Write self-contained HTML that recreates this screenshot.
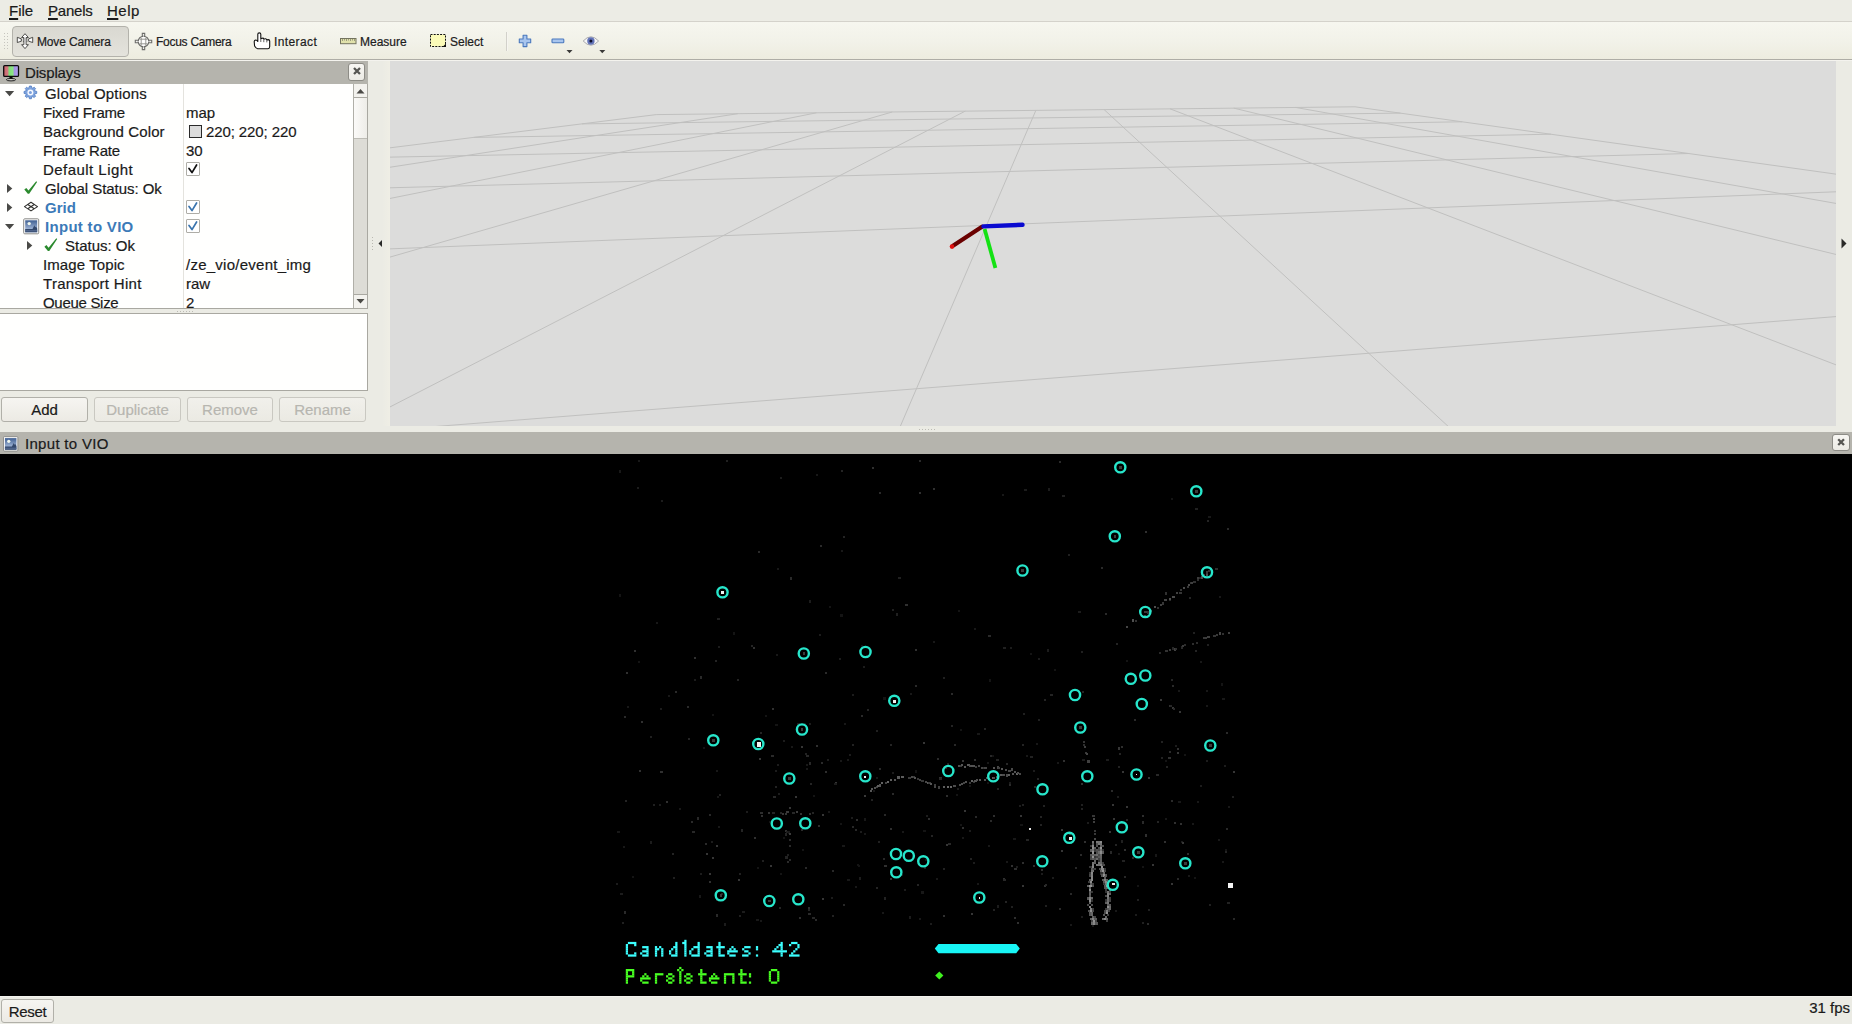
<!DOCTYPE html>
<html>
<head>
<meta charset="utf-8">
<title>RViz</title>
<style>
*{box-sizing:border-box;margin:0;padding:0}
html,body{width:1852px;height:1024px;overflow:hidden}
body{background:#ebebe4;font-family:"Liberation Sans",sans-serif;font-size:15px;color:#1a1a1a;position:relative;-webkit-text-stroke:0.2px #1a1a1a}
.abs{position:absolute}
.t{position:absolute;white-space:nowrap;line-height:19px;height:19px}
u{text-decoration:underline;text-underline-offset:2px;text-decoration-thickness:1.6px}
/* menu */
#menubar{left:0;top:0;width:1852px;height:22px;background:#ecece5;border-bottom:1px solid #d4d2cb}
#menubar .t{top:1px;font-size:15px}
/* toolbar */
#toolbar{left:0;top:22px;width:1852px;height:39px;background:linear-gradient(#f6f6ef,#f2f2e9 50%,#edecdf);border-bottom:1px solid #f4f3ee}
#toolbar:after{content:"";position:absolute;left:0;right:0;bottom:0;height:1px;background:#aeada6}
#toolbar .t{font-size:12px;top:11px;line-height:18px;height:18px;color:#222}
#mvbtn{left:12px;top:4px;width:117px;height:31px;border:1px solid #b3b2ab;border-radius:4px;background:linear-gradient(#d9d8d1,#e4e3dc)}
.tsep{left:506px;top:10px;width:1px;height:19px;background:#d2d1ca;border-right:1px solid #f6f5f0;width:2px}
/* dock title */
.dtitle{background:#b5b4ad;height:23px}
.dtitle .t{top:2px;color:#1a1a1a}
.closeb{position:absolute;width:17px;height:17px;border:1px solid #8d8c86;border-radius:3px;background:linear-gradient(#f7f6f2,#ecebe5)}
/* tree */
#tree{left:0;top:84px;width:368px;height:225px;background:#fffffe;border-right:1px solid #a9a8a1;border-bottom:1px solid #a9a8a1;overflow:hidden}
#tree .t{font-size:15px}
#tree .b{font-weight:bold;color:#3c7ab8;-webkit-text-stroke:0}
#coldiv{left:183px;top:0;width:1px;height:224px;background:#e4e3de}
.cb{position:absolute;width:14px;height:14px;border:1px solid #aeada7;background:#fff;border-radius:1px}
#sbar{left:353px;top:0;width:14px;height:224px;background:#dddcd6;border-left:1px solid #b0afa8}
#propbox{left:0;top:313px;width:368px;height:78px;background:#fffffe;border:1px solid #a9a8a1;border-left:none}
.btn{position:absolute;height:25px;border:1px solid #b1b0a9;border-radius:3px;background:linear-gradient(#f6f5f1,#eceae4);font-size:15px;text-align:center;line-height:24px;color:#1a1a1a}
.btn.dis{color:#b7b6b0;-webkit-text-stroke:0.2px #b7b6b0;border-color:#c9c8c1;background:linear-gradient(#f1f0eb,#ebeae3)}
#view3d{left:390px;top:61px;width:1446px;height:365px;background:#dcdcdb;overflow:hidden}
#imgarea{left:0;top:454px;width:1852px;height:542px;background:#000;overflow:hidden}
#status{left:0;top:996px;width:1852px;height:28px;background:#ebebe4;border-top:1px solid #f3f3ee}
</style>
</head>
<body>
<!-- MENU BAR -->
<div id="menubar" class="abs">
  <div class="t" style="left:9px"><u>F</u>ile</div>
  <div class="t" style="letter-spacing:-0.2px;left:48px"><u>P</u>anels</div>
  <div class="t" style="letter-spacing:0.5px;left:107px"><u>H</u>elp</div>
</div>

<!-- TOOLBAR -->
<div id="toolbar" class="abs">
  <div id="mvbtn" class="abs"></div>
  <div class="t" id="tb1" style="letter-spacing:-0.15px;left:37px">Move Camera</div>
  <div class="t" id="tb2" style="letter-spacing:-0.27px;left:156px">Focus Camera</div>
  <div class="t" id="tb3" style="letter-spacing:0.4px;left:274px">Interact</div>
  <div class="t" id="tb4" style="left:360px">Measure</div>
  <div class="t" id="tb5" style="left:450px">Select</div>
  <div class="abs tsep"></div>
  <svg class="abs" style="left:0;top:0" width="620" height="39" viewBox="0 22 620 39">
<g fill="#c6c5be"><rect x="4" y="33" width="1" height="1"/><rect x="7" y="33" width="1" height="1"/><rect x="4" y="36" width="1" height="1"/><rect x="7" y="36" width="1" height="1"/><rect x="4" y="39" width="1" height="1"/><rect x="7" y="39" width="1" height="1"/><rect x="4" y="42" width="1" height="1"/><rect x="7" y="42" width="1" height="1"/><rect x="4" y="45" width="1" height="1"/><rect x="7" y="45" width="1" height="1"/><rect x="4" y="48" width="1" height="1"/><rect x="7" y="48" width="1" height="1"/></g>
<!-- move camera -->
<g stroke="#343432" stroke-width="0.85" fill="#fdfdfd" stroke-linejoin="round">
<path d="M17.3 37.3 L21.4 38.9 L21.4 41.2 L17.3 42.5 Z"/>
<path d="M32.7 37.3 L28.6 38.9 L28.6 41.2 L32.7 42.5 Z"/>
<path d="M20.8 40 Q25 37 29.2 40 Q25 43.2 20.8 40Z" fill="#dcdcd8" stroke="#4a4a48" stroke-dasharray="1.3 1.1" stroke-width="0.8"/>
<path d="M25 33.7 L28.4 37.5 L26.1 37.5 L26.1 44.7 L28.4 44.7 L25 48.6 L21.6 44.7 L23.9 44.7 L23.9 37.5 L21.6 37.5 Z"/>
</g>
<!-- focus camera -->
<g stroke="#6e6e6b" stroke-width="1.1" fill="none">
<circle cx="143.5" cy="41.5" r="5.3" fill="#fafaf8"/>
<path d="M142.3 33.4h2.4v3h-2.4zM142.3 46.6h2.4v3h-2.4zM135.3 40.3h3v2.4h-3zM148.7 40.3h3v2.4h-3z" fill="#f4f4f0"/>
<path d="M143.5 36.5v10M138.5 41.5h10" stroke="#fff" stroke-width="1"/>
<path d="M141.2 37.5v8M145.8 37.5v8M139.5 39.2h8M139.5 43.8h8" stroke="#8e8e8b" stroke-width="0.9"/>
</g>
<!-- interact hand -->
<path d="M257.8 41.5 L257.8 34.2 Q257.8 32.9 259.3 32.9 Q260.8 32.9 260.8 34.2 L260.8 38.6 L262.3 38.2 Q263.6 38 263.8 39.2 L265.3 38.8 Q266.6 38.7 266.8 39.9 L268.3 39.6 Q269.7 39.6 269.7 41 L269.7 46.5 Q269.7 48.6 268 48.7 L257.6 48.7 Q256 48.4 254.6 46 L254.2 41.6 Q254.3 40 255.8 40 Q257 40.1 257.8 41.5 Z" fill="#fff" stroke="#111" stroke-width="1.1" stroke-linejoin="round"/>
<path d="M260.8 38.8v3.2M263.8 39.6v2.6M266.8 40.2v2.2" stroke="#555" stroke-width="0.9" fill="none"/>
<!-- measure ruler -->
<rect x="340.5" y="38.5" width="15.5" height="5.2" fill="#e1e2ac" stroke="#74745f" stroke-width="1"/>
<path d="M342.5 39v2M344.5 39v1.5M346.5 39v2M348.5 39v1.5M350.5 39v2M352.5 39v1.5M354.5 39v2" stroke="#8a8a70" stroke-width="0.8"/>
<!-- select -->
<rect x="430.5" y="34.5" width="15" height="12" fill="#fbfbb8" stroke="#111" stroke-width="1" stroke-dasharray="2 1.2"/>
<path d="M446 43.5 L446 47 L442.5 47 Z" fill="#111"/>
<!-- plus -->
<path d="M523.1 35.2h3.8v3.8h3.8v3.8h-3.8v3.8h-3.8v-3.8h-3.8v-3.8h3.8z" fill="#a8c5ee" stroke="#4a78bd" stroke-width="1.1" stroke-linejoin="round"/>
<!-- minus -->
<rect x="552" y="39" width="11.8" height="3.8" rx="0.8" fill="#a8c5ee" stroke="#4a78bd" stroke-width="1.1"/>
<path d="M566.5 50 L572.5 50 L569.5 53.2Z" fill="#3a3a38"/>
<!-- eye -->
<path d="M583.2 41 Q590.9 32.5 598.6 41 Q590.9 49.5 583.2 41Z" fill="#f6f6f6" stroke="#a9a9ad" stroke-width="1"/>
<circle cx="590.9" cy="41" r="3.7" fill="#6273b8"/>
<circle cx="590.9" cy="41" r="1.5" fill="#10102a"/>
<path d="M599.3 50 L605.3 50 L602.3 53.2Z" fill="#3a3a38"/>
</svg>
</div>

<!-- DISPLAYS DOCK -->
<div class="abs dtitle" style="left:0;top:61px;width:368px">
  <div class="t" style="letter-spacing:-0.15px;left:25px">Displays</div>
  <div class="closeb" style="left:348px;top:2px;height:18px"></div>
  <svg class="abs" style="left:0;top:0" width="368" height="23" viewBox="0 61 368 23">
<defs><linearGradient id="mon" x1="0" x2="1" y1="0" y2="0"><stop offset="0" stop-color="#c8626a"/><stop offset="0.27" stop-color="#d27a80"/><stop offset="0.36" stop-color="#7fdc7a"/><stop offset="0.62" stop-color="#8ce688"/><stop offset="0.72" stop-color="#a392e2"/><stop offset="1" stop-color="#b3a4ee"/></linearGradient></defs>
<rect x="3.7" y="65.6" width="14.8" height="10.8" rx="1" fill="url(#mon)" stroke="#0a0a0a" stroke-width="1.3"/>
<path d="M9.6 77 L12.4 77 L13 78.8 L9 78.8Z" fill="#0a0a0a"/>
<ellipse cx="11" cy="79.7" rx="4.6" ry="1.2" fill="#d8d8d4" stroke="#0a0a0a" stroke-width="0.9"/>
<path d="M354 68 L360 74 M360 68 L354 74" stroke="#565652" stroke-width="2.3" fill="none"/>
</svg>
</div>
<div id="tree" class="abs">
  <div id="coldiv" class="abs"></div>
  <div class="t" style="letter-spacing:0.2px;left:45px;top:0px">Global Options</div>
  <div class="t" style="letter-spacing:-0.2px;left:43px;top:19px">Fixed Frame</div>
  <div class="t" style="left:186px;top:19px">map</div>
  <div class="t" style="letter-spacing:0.1px;left:43px;top:38px">Background Color</div>
  <div class="abs" style="left:189px;top:41px;width:13px;height:13px;border:1px solid #2a2a2a;background:#dcdcdc"></div>
  <div class="t" style="letter-spacing:-0.1px;left:206px;top:38px">220; 220; 220</div>
  <div class="t" style="letter-spacing:-0.23px;left:43px;top:57px">Frame Rate</div>
  <div class="t" style="left:186px;top:57px">30</div>
  <div class="t" style="letter-spacing:0.46px;left:43px;top:76px">Default Light</div>
  <div class="cb" style="left:186px;top:78px"></div>
  <div class="t" style="letter-spacing:-0.05px;left:45px;top:95px">Global Status: Ok</div>
  <div class="t b" style="left:45px;top:114px">Grid</div>
  <div class="cb" style="left:186px;top:116px"></div>
  <div class="t b" style="letter-spacing:0.3px;left:45px;top:133px">Input to VIO</div>
  <div class="cb" style="left:186px;top:135px"></div>
  <div class="t" style="left:65px;top:152px">Status: Ok</div>
  <div class="t" style="letter-spacing:0.1px;left:43px;top:171px">Image Topic</div>
  <div class="t" style="letter-spacing:0.25px;left:186px;top:171px">/ze_vio/event_img</div>
  <div class="t" style="letter-spacing:0.3px;left:43px;top:190px">Transport Hint</div>
  <div class="t" style="left:186px;top:190px">raw</div>
  <div class="t" style="letter-spacing:-0.3px;left:43px;top:209px">Queue Size</div>
  <div class="t" style="left:186px;top:209px">2</div>
  <div id="sbar" class="abs">
    <div class="abs" style="left:0;top:0;width:13px;height:14px;background:#f3f2ee;border-bottom:1px solid #a9a8a1"></div>
    <div class="abs" style="left:0;top:14px;width:13px;height:41px;background:linear-gradient(90deg,#fbfaf8,#eeede8);border-bottom:1px solid #bdbcb5"></div>
    <div class="abs" style="left:0;top:210px;width:13px;height:14px;background:#f3f2ee;border-top:1px solid #a9a8a1"></div>
    <svg class="abs" style="left:0;top:0" width="13" height="224"><path d="M2.5 9.5 L6.5 5 L10.5 9.5Z" fill="#4a4945"/><path d="M2.5 215 L10.5 215 L6.5 219.5Z" fill="#4a4945"/></svg>
  </div>
  <svg class="abs" style="left:0;top:0" width="353" height="224" viewBox="0 84 353 224">
<defs><linearGradient id="sky2" x1="0" x2="0" y1="0" y2="1"><stop offset="0" stop-color="#3f5f92"/><stop offset="0.7" stop-color="#9ab0d2"/><stop offset="1" stop-color="#8aa0c4"/></linearGradient></defs>
<g fill="#4a4a47">
<path d="M5 91 L14.2 91 L9.6 96.2Z"/>
<path d="M7 184 L12.3 188.5 L7 193Z"/>
<path d="M7 203 L12.3 207.5 L7 212Z"/>
<path d="M5 224 L14.2 224 L9.6 229.2Z"/>
<path d="M27 241 L32.3 245.5 L27 250Z"/>
</g>
<path d="M36.72 91.38 L36.72 93.42 L35.16 93.56 L34.59 94.94 L35.59 96.15 L34.15 97.59 L32.94 96.59 L31.56 97.16 L31.42 98.72 L29.38 98.72 L29.24 97.16 L27.86 96.59 L26.65 97.59 L25.21 96.15 L26.21 94.94 L25.64 93.56 L24.08 93.42 L24.08 91.38 L25.64 91.24 L26.21 89.86 L25.21 88.65 L26.65 87.21 L27.86 88.21 L29.24 87.64 L29.38 86.08 L31.42 86.08 L31.56 87.64 L32.94 88.21 L34.15 87.21 L35.59 88.65 L34.59 89.86 L35.16 91.24Z" fill="#7fa4de" stroke="#5580c4" stroke-width="0.9" stroke-linejoin="round"/><circle cx="30.4" cy="92.4" r="3" fill="#f6f9ff"/><circle cx="30.4" cy="92.4" r="1.5" fill="#7a9fdb"/><path d="M24.3 189.6 L26.3 187.9 L28.5 190.6 L36.2 181.2 L37.1 181.9 L29.2 193.8 L27.8 193.8Z" fill="#2b8a2e"/><path d="M44.4 246.7 L46.4 245.0 L48.6 247.7 L56.3 238.3 L57.2 239.0 L49.3 250.9 L47.9 250.9Z" fill="#2b8a2e"/>
<g stroke="#2f2f2d" stroke-width="1.1" fill="none" stroke-linejoin="round"><path d="M24.5 206.6 L31 202.3 L37.5 206.6 L31 210.9Z"/><path d="M27.75 204.45 L34.25 208.75 M34.25 204.45 L27.75 208.75"/></g>
<g transform="translate(23.2,218.3)"><rect x="0.5" y="0.5" width="15" height="15" rx="1" fill="#fdfdfd" stroke="#8b8b88" stroke-width="1"/>
<rect x="2" y="2" width="12" height="12" fill="url(#sky2)"/>
<circle cx="6" cy="5.3" r="1.7" fill="#eef6ee"/>
<path d="M2 10.6 L9.3 10.6 L11.2 7 L12 9 L12.8 8.2 L14 10.2 L14 14 L2 14Z" fill="#33486c"/>
<rect x="2" y="12" width="12" height="1" fill="#5a7098"/></g>
<path d="M189.0 168.4 L192.0 172.6 L196.6 165.0" stroke="#111" stroke-width="1.7" fill="none" stroke-linecap="round" stroke-linejoin="round"/><path d="M189.0 206.4 L192.0 210.6 L196.6 203.0" stroke="#3a74ae" stroke-width="1.7" fill="none" stroke-linecap="round" stroke-linejoin="round"/><path d="M189.0 225.4 L192.0 229.6 L196.6 222.0" stroke="#3a74ae" stroke-width="1.7" fill="none" stroke-linecap="round" stroke-linejoin="round"/>
</svg>
</div>
<div id="propbox" class="abs"></div>
<div class="btn" style="left:1px;top:397px;width:87px">Add</div>
<div class="btn dis" style="left:94px;top:397px;width:87px">Duplicate</div>
<div class="btn dis" style="left:187px;top:397px;width:86px">Remove</div>
<div class="btn dis" style="left:279px;top:397px;width:87px">Rename</div>

<!-- splitter dots -->
<svg class="abs" style="left:176px;top:310px" width="20" height="3"><g fill="#bcbbb4"><rect x="1" y="1" width="1" height="1"/><rect x="4" y="1" width="1" height="1"/><rect x="7" y="1" width="1" height="1"/><rect x="10" y="1" width="1" height="1"/><rect x="13" y="1" width="1" height="1"/><rect x="16" y="1" width="1" height="1"/></g></svg>
<svg class="abs" style="left:918px;top:428px" width="20" height="3"><g fill="#bcbbb4"><rect x="1" y="1" width="1" height="1"/><rect x="4" y="1" width="1" height="1"/><rect x="7" y="1" width="1" height="1"/><rect x="10" y="1" width="1" height="1"/><rect x="13" y="1" width="1" height="1"/><rect x="16" y="1" width="1" height="1"/></g></svg>
<!-- splitter arrows -->
<svg class="abs" style="left:368px;top:61px" width="22" height="365"><path d="M10.5 182.5 L15.5 177.5 L15.5 187.5Z" fill="#2a2a28"/><g fill="#b9b8b1"><rect x="4" y="176" width="1" height="1"/><rect x="4" y="179" width="1" height="1"/><rect x="4" y="182" width="1" height="1"/><rect x="4" y="185" width="1" height="1"/><rect x="4" y="188" width="1" height="1"/></g></svg>
<svg class="abs" style="left:1836px;top:61px" width="16" height="365"><path d="M10.5 182.5 L5.5 177.5 L5.5 187.5Z" fill="#2a2a28"/></svg>

<div class="abs" style="left:382px;top:61px;width:8px;height:365px;background:linear-gradient(90deg,#ebebe4,#efeee5)"></div>
<!-- 3D VIEW -->
<div id="view3d" class="abs">
<svg width="1446" height="365" viewBox="0 0 1446 365" style="position:absolute;left:0;top:0">
<g stroke="#c0c0bf" stroke-width="1" fill="none">
<line x1="266.2" y1="53.6" x2="-19295.4" y2="2494.9"/>
<line x1="266.2" y1="53.6" x2="965.0" y2="45.8"/>
<line x1="347.8" y1="52.7" x2="-15517.2" y2="2495.3"/>
<line x1="192.0" y1="62.9" x2="1010.5" y2="52.1"/>
<line x1="426.4" y1="51.8" x2="-11738.9" y2="2495.7"/>
<line x1="83.8" y1="76.4" x2="1072.3" y2="60.8"/>
<line x1="502.2" y1="51.0" x2="-7960.7" y2="2496.1"/>
<line x1="-88.5" y1="97.9" x2="1161.0" y2="73.2"/>
<line x1="575.3" y1="50.1" x2="-4182.4" y2="2496.6"/>
<line x1="-405.7" y1="137.5" x2="1299.2" y2="92.5"/>
<line x1="645.9" y1="49.3" x2="-404.2" y2="2497.0"/>
<line x1="-1183.7" y1="234.6" x2="1544.3" y2="126.9"/>
<line x1="714.1" y1="48.6" x2="3374.1" y2="2497.4"/>
<line x1="-6092.1" y1="847.1" x2="2098.4" y2="204.4"/>
<line x1="780.0" y1="47.8" x2="7152.3" y2="2497.8"/>
<line x1="4159.3" y1="2497.5" x2="4542.8" y2="546.7"/>
<line x1="843.7" y1="47.1" x2="10930.5" y2="2498.2"/>
<line x1="905.4" y1="46.4" x2="14708.8" y2="2498.7"/>
<line x1="965.0" y1="45.8" x2="18487.0" y2="2499.1"/>
</g>
<g stroke-linecap="round" fill="none" transform="translate(-390,-61)">
<path d="M982 226.8 L953 245.8" stroke="#6a0000" stroke-width="4.2"/>
<circle cx="952" cy="246.6" r="2.3" fill="#e01010" stroke="none"/>
<path d="M984.6 229 L995.4 268" stroke="#14e214" stroke-width="3.8" stroke-linecap="butt"/>
<path d="M983.5 226.4 L1022.5 224.8" stroke="#0a0ad0" stroke-width="4.4"/>
</g>
</svg>
</div>

<!-- IMAGE DOCK -->
<div class="abs dtitle" style="left:0;top:432px;width:1852px;height:22px">
  <div class="t" style="letter-spacing:0.3px;left:25px;top:2px">Input to VIO</div>
  <div class="closeb" style="left:1832px;top:2px;width:18px;height:17px"></div>
  <svg class="abs" style="left:0;top:0" width="1852" height="22" viewBox="0 432 1852 22">
<defs><linearGradient id="sky" x1="0" x2="0" y1="0" y2="1"><stop offset="0" stop-color="#3f5f92"/><stop offset="0.7" stop-color="#9ab0d2"/><stop offset="1" stop-color="#8aa0c4"/></linearGradient></defs>
<g transform="translate(3,436.2) scale(0.96)"><rect x="0.5" y="0.5" width="15" height="15" rx="1" fill="#fdfdfd" stroke="#8b8b88" stroke-width="1"/>
<rect x="2" y="2" width="12" height="12" fill="url(#sky)"/>
<circle cx="6" cy="5.3" r="1.7" fill="#eef6ee"/>
<path d="M2 10.6 L9.3 10.6 L11.2 7 L12 9 L12.8 8.2 L14 10.2 L14 14 L2 14Z" fill="#33486c"/>
<rect x="2" y="12" width="12" height="1" fill="#5a7098"/></g>
<path d="M1838.2 439.2 L1844 445 M1844 439.2 L1838.2 445" stroke="#565652" stroke-width="2.3" fill="none"/>
</svg>
</div>
<div id="imgarea" class="abs">
<svg width="1852" height="542" viewBox="0 0 1852 542" style="position:absolute;left:0;top:0">
<g shape-rendering="crispEdges"><rect x="660.0" y="254.3" width="2.1" height="2.1" fill="rgb(28,28,28)"/><rect x="976.9" y="428.8" width="2.1" height="2.1" fill="rgb(24,24,24)"/><rect x="638.3" y="206.5" width="2.1" height="2.1" fill="rgb(20,20,20)"/><rect x="764.5" y="261.3" width="2.1" height="2.1" fill="rgb(20,20,20)"/><rect x="1004.6" y="446.6" width="2.1" height="2.1" fill="rgb(36,36,36)"/><rect x="950.8" y="270.6" width="2.1" height="2.1" fill="rgb(36,36,36)"/><rect x="1037.5" y="203.7" width="2.1" height="2.1" fill="rgb(28,28,28)"/><rect x="904.1" y="435.2" width="2.1" height="2.1" fill="rgb(28,28,28)"/><rect x="801.2" y="375.0" width="2.1" height="2.1" fill="rgb(42,42,42)"/><rect x="717.4" y="163.7" width="2.1" height="2.1" fill="rgb(32,32,32)"/><rect x="639.3" y="316.1" width="2.1" height="2.1" fill="rgb(48,48,48)"/><rect x="961.6" y="372.5" width="2.1" height="2.1" fill="rgb(48,48,48)"/><rect x="809.8" y="328.7" width="2.1" height="2.1" fill="rgb(36,36,36)"/><rect x="923.4" y="376.1" width="2.1" height="2.1" fill="rgb(20,20,20)"/><rect x="1136.6" y="445.2" width="2.1" height="2.1" fill="rgb(32,32,32)"/><rect x="1047.9" y="34.4" width="2.1" height="2.1" fill="rgb(28,28,28)"/><rect x="1016.9" y="467.8" width="2.1" height="2.1" fill="rgb(48,48,48)"/><rect x="891.7" y="338.7" width="2.1" height="2.1" fill="rgb(42,42,42)"/><rect x="830.5" y="443.3" width="2.1" height="2.1" fill="rgb(28,28,28)"/><rect x="857.8" y="411.0" width="2.1" height="2.1" fill="rgb(20,20,20)"/><rect x="718.3" y="191.6" width="2.1" height="2.1" fill="rgb(28,28,28)"/><rect x="1163.6" y="386.6" width="2.1" height="2.1" fill="rgb(48,48,48)"/><rect x="956.7" y="333.9" width="2.1" height="2.1" fill="rgb(28,28,28)"/><rect x="622.5" y="392.1" width="2.1" height="2.1" fill="rgb(24,24,24)"/><rect x="844.3" y="268.5" width="2.1" height="2.1" fill="rgb(24,24,24)"/><rect x="1043.8" y="244.7" width="2.1" height="2.1" fill="rgb(36,36,36)"/><rect x="1021.7" y="349.5" width="2.1" height="2.1" fill="rgb(32,32,32)"/><rect x="1173.6" y="368.2" width="2.1" height="2.1" fill="rgb(48,48,48)"/><rect x="1037.6" y="265.2" width="2.1" height="2.1" fill="rgb(32,32,32)"/><rect x="840.8" y="15.9" width="2.1" height="2.1" fill="rgb(36,36,36)"/><rect x="848.6" y="300.3" width="2.1" height="2.1" fill="rgb(28,28,28)"/><rect x="989.0" y="225.4" width="2.1" height="2.1" fill="rgb(20,20,20)"/><rect x="1142.2" y="467.8" width="2.1" height="2.1" fill="rgb(32,32,32)"/><rect x="1080.5" y="349.7" width="2.1" height="2.1" fill="rgb(32,32,32)"/><rect x="1205.6" y="250.7" width="2.1" height="2.1" fill="rgb(24,24,24)"/><rect x="1043.5" y="430.9" width="2.1" height="2.1" fill="rgb(48,48,48)"/><rect x="943.0" y="461.0" width="2.1" height="2.1" fill="rgb(48,48,48)"/><rect x="671.5" y="398.8" width="2.1" height="2.1" fill="rgb(36,36,36)"/><rect x="842.7" y="82.0" width="2.1" height="2.1" fill="rgb(36,36,36)"/><rect x="951.3" y="238.8" width="2.1" height="2.1" fill="rgb(42,42,42)"/><rect x="753.5" y="383.0" width="2.1" height="2.1" fill="rgb(48,48,48)"/><rect x="1144.5" y="380.4" width="2.1" height="2.1" fill="rgb(48,48,48)"/><rect x="863.8" y="379.2" width="2.1" height="2.1" fill="rgb(24,24,24)"/><rect x="1045.1" y="450.7" width="2.1" height="2.1" fill="rgb(32,32,32)"/><rect x="1117.1" y="341.7" width="2.1" height="2.1" fill="rgb(28,28,28)"/><rect x="1002.5" y="424.4" width="2.1" height="2.1" fill="rgb(48,48,48)"/><rect x="616.2" y="428.6" width="2.1" height="2.1" fill="rgb(28,28,28)"/><rect x="1180.0" y="369.3" width="2.1" height="2.1" fill="rgb(48,48,48)"/><rect x="738.8" y="419.2" width="2.1" height="2.1" fill="rgb(32,32,32)"/><rect x="1105.1" y="159.3" width="2.1" height="2.1" fill="rgb(42,42,42)"/><rect x="860.8" y="191.4" width="2.1" height="2.1" fill="rgb(20,20,20)"/><rect x="708.9" y="426.6" width="2.1" height="2.1" fill="rgb(48,48,48)"/><rect x="1022.3" y="289.6" width="2.1" height="2.1" fill="rgb(36,36,36)"/><rect x="1223.8" y="310.9" width="2.1" height="2.1" fill="rgb(28,28,28)"/><rect x="711.8" y="260.0" width="2.1" height="2.1" fill="rgb(20,20,20)"/><rect x="623.8" y="457.4" width="2.1" height="2.1" fill="rgb(42,42,42)"/><rect x="678.8" y="354.0" width="2.1" height="2.1" fill="rgb(24,24,24)"/><rect x="884.4" y="411.1" width="2.1" height="2.1" fill="rgb(48,48,48)"/><rect x="926.2" y="360.6" width="2.1" height="2.1" fill="rgb(28,28,28)"/><rect x="776.1" y="199.7" width="2.1" height="2.1" fill="rgb(24,24,24)"/><rect x="652.8" y="349.5" width="2.1" height="2.1" fill="rgb(32,32,32)"/><rect x="1026.4" y="384.6" width="2.1" height="2.1" fill="rgb(36,36,36)"/><rect x="876.2" y="432.6" width="2.1" height="2.1" fill="rgb(36,36,36)"/><rect x="1157.0" y="366.6" width="2.1" height="2.1" fill="rgb(36,36,36)"/><rect x="617.4" y="377.2" width="2.1" height="2.1" fill="rgb(24,24,24)"/><rect x="702.9" y="293.1" width="2.1" height="2.1" fill="rgb(20,20,20)"/><rect x="959.9" y="370.3" width="2.1" height="2.1" fill="rgb(20,20,20)"/><rect x="632.3" y="421.5" width="2.1" height="2.1" fill="rgb(20,20,20)"/><rect x="890.3" y="290.1" width="2.1" height="2.1" fill="rgb(36,36,36)"/><rect x="930.6" y="381.0" width="2.1" height="2.1" fill="rgb(36,36,36)"/><rect x="1199.7" y="330.5" width="2.1" height="2.1" fill="rgb(28,28,28)"/><rect x="1188.0" y="420.9" width="2.1" height="2.1" fill="rgb(24,24,24)"/><rect x="660.4" y="316.6" width="2.1" height="2.1" fill="rgb(48,48,48)"/><rect x="691.0" y="366.8" width="2.1" height="2.1" fill="rgb(42,42,42)"/><rect x="700.2" y="222.4" width="2.1" height="2.1" fill="rgb(42,42,42)"/><rect x="1206.5" y="190.0" width="2.1" height="2.1" fill="rgb(32,32,32)"/><rect x="716.1" y="315.9" width="2.1" height="2.1" fill="rgb(24,24,24)"/><rect x="715.3" y="205.5" width="2.1" height="2.1" fill="rgb(36,36,36)"/><rect x="865.8" y="200.7" width="2.1" height="2.1" fill="rgb(28,28,28)"/><rect x="812.8" y="341.2" width="2.1" height="2.1" fill="rgb(20,20,20)"/><rect x="824.9" y="218.2" width="2.1" height="2.1" fill="rgb(42,42,42)"/><rect x="933.1" y="34.0" width="2.1" height="2.1" fill="rgb(48,48,48)"/><rect x="756.9" y="413.3" width="2.1" height="2.1" fill="rgb(20,20,20)"/><rect x="779.9" y="22.5" width="2.1" height="2.1" fill="rgb(28,28,28)"/><rect x="1084.3" y="386.8" width="2.1" height="2.1" fill="rgb(48,48,48)"/><rect x="1181.0" y="386.5" width="2.1" height="2.1" fill="rgb(28,28,28)"/><rect x="867.1" y="254.6" width="2.1" height="2.1" fill="rgb(36,36,36)"/><rect x="969.3" y="331.1" width="2.1" height="2.1" fill="rgb(20,20,20)"/><rect x="788.3" y="377.4" width="2.1" height="2.1" fill="rgb(24,24,24)"/><rect x="879.1" y="37.8" width="2.1" height="2.1" fill="rgb(42,42,42)"/><rect x="622.2" y="468.3" width="2.1" height="2.1" fill="rgb(32,32,32)"/><rect x="808.7" y="146.4" width="2.1" height="2.1" fill="rgb(28,28,28)"/><rect x="891.8" y="317.9" width="2.1" height="2.1" fill="rgb(28,28,28)"/><rect x="624.5" y="346.3" width="2.1" height="2.1" fill="rgb(36,36,36)"/><rect x="1222.4" y="244.1" width="2.1" height="2.1" fill="rgb(24,24,24)"/><rect x="1195.4" y="53.6" width="2.1" height="2.1" fill="rgb(32,32,32)"/><rect x="1022.7" y="258.9" width="2.1" height="2.1" fill="rgb(32,32,32)"/><rect x="757.6" y="96.8" width="2.1" height="2.1" fill="rgb(42,42,42)"/><rect x="1009.9" y="193.0" width="2.1" height="2.1" fill="rgb(28,28,28)"/><rect x="1224.7" y="394.9" width="2.1" height="2.1" fill="rgb(20,20,20)"/><rect x="658.9" y="350.0" width="2.1" height="2.1" fill="rgb(28,28,28)"/><rect x="851.5" y="240.3" width="2.1" height="2.1" fill="rgb(28,28,28)"/><rect x="986.8" y="327.5" width="2.1" height="2.1" fill="rgb(20,20,20)"/><rect x="778.5" y="453.2" width="2.1" height="2.1" fill="rgb(36,36,36)"/><rect x="815.9" y="20.1" width="2.1" height="2.1" fill="rgb(24,24,24)"/><rect x="909.8" y="238.8" width="2.1" height="2.1" fill="rgb(24,24,24)"/><rect x="769.1" y="366.5" width="2.1" height="2.1" fill="rgb(20,20,20)"/><rect x="759.6" y="277.5" width="2.1" height="2.1" fill="rgb(36,36,36)"/><rect x="1144.9" y="76.5" width="2.1" height="2.1" fill="rgb(48,48,48)"/><rect x="1226.5" y="73.8" width="2.1" height="2.1" fill="rgb(42,42,42)"/><rect x="704.9" y="389.2" width="2.1" height="2.1" fill="rgb(42,42,42)"/><rect x="1168.9" y="297.0" width="2.1" height="2.1" fill="rgb(42,42,42)"/><rect x="1050.4" y="240.1" width="2.1" height="2.1" fill="rgb(36,36,36)"/><rect x="1082.5" y="269.5" width="2.1" height="2.1" fill="rgb(48,48,48)"/><rect x="1114.7" y="389.9" width="2.1" height="2.1" fill="rgb(36,36,36)"/><rect x="1110.5" y="336.1" width="2.1" height="2.1" fill="rgb(42,42,42)"/><rect x="1010.7" y="452.1" width="2.1" height="2.1" fill="rgb(32,32,32)"/><rect x="1134.0" y="264.8" width="2.1" height="2.1" fill="rgb(42,42,42)"/><rect x="626.7" y="252.2" width="2.1" height="2.1" fill="rgb(24,24,24)"/><rect x="918.9" y="5.5" width="2.1" height="2.1" fill="rgb(42,42,42)"/><rect x="1194.1" y="423.3" width="2.1" height="2.1" fill="rgb(20,20,20)"/><rect x="1024.4" y="34.8" width="2.1" height="2.1" fill="rgb(28,28,28)"/><rect x="1117.5" y="399.1" width="2.1" height="2.1" fill="rgb(24,24,24)"/><rect x="1067.9" y="99.8" width="2.1" height="2.1" fill="rgb(32,32,32)"/><rect x="1039.6" y="362.2" width="2.1" height="2.1" fill="rgb(36,36,36)"/><rect x="821.0" y="308.3" width="2.1" height="2.1" fill="rgb(42,42,42)"/><rect x="804.0" y="269.1" width="2.1" height="2.1" fill="rgb(20,20,20)"/><rect x="914.6" y="230.9" width="2.1" height="2.1" fill="rgb(42,42,42)"/><rect x="1091.4" y="467.9" width="2.1" height="2.1" fill="rgb(36,36,36)"/><rect x="738.7" y="460.8" width="2.1" height="2.1" fill="rgb(32,32,32)"/><rect x="625.9" y="218.3" width="2.1" height="2.1" fill="rgb(48,48,48)"/><rect x="929.6" y="468.5" width="2.1" height="2.1" fill="rgb(28,28,28)"/><rect x="855.2" y="432.0" width="2.1" height="2.1" fill="rgb(24,24,24)"/><rect x="661.3" y="46.2" width="2.1" height="2.1" fill="rgb(28,28,28)"/><rect x="1206.7" y="65.9" width="2.1" height="2.1" fill="rgb(36,36,36)"/><rect x="924.2" y="413.2" width="2.1" height="2.1" fill="rgb(32,32,32)"/><rect x="828.6" y="151.6" width="2.1" height="2.1" fill="rgb(20,20,20)"/><rect x="857.3" y="410.3" width="2.1" height="2.1" fill="rgb(20,20,20)"/><rect x="839.0" y="203.9" width="2.1" height="2.1" fill="rgb(28,28,28)"/><rect x="1026.1" y="300.5" width="2.1" height="2.1" fill="rgb(24,24,24)"/><rect x="732.9" y="178.4" width="2.1" height="2.1" fill="rgb(20,20,20)"/><rect x="1119.2" y="298.6" width="2.1" height="2.1" fill="rgb(36,36,36)"/><rect x="956.1" y="340.0" width="2.1" height="2.1" fill="rgb(20,20,20)"/><rect x="1194.7" y="195.9" width="2.1" height="2.1" fill="rgb(36,36,36)"/><rect x="1082.4" y="305.0" width="2.1" height="2.1" fill="rgb(28,28,28)"/><rect x="916.5" y="429.9" width="2.1" height="2.1" fill="rgb(36,36,36)"/><rect x="694.1" y="224.5" width="2.1" height="2.1" fill="rgb(28,28,28)"/><rect x="790.0" y="123.4" width="2.1" height="2.1" fill="rgb(42,42,42)"/><rect x="776.6" y="310.3" width="2.1" height="2.1" fill="rgb(28,28,28)"/><rect x="915.1" y="316.4" width="2.1" height="2.1" fill="rgb(20,20,20)"/><rect x="1177.6" y="236.1" width="2.1" height="2.1" fill="rgb(24,24,24)"/><rect x="896.3" y="159.4" width="2.1" height="2.1" fill="rgb(32,32,32)"/><rect x="775.4" y="270.0" width="2.1" height="2.1" fill="rgb(20,20,20)"/><rect x="1080.5" y="196.8" width="2.1" height="2.1" fill="rgb(32,32,32)"/><rect x="1082.1" y="236.6" width="2.1" height="2.1" fill="rgb(36,36,36)"/><rect x="1006.0" y="407.0" width="2.1" height="2.1" fill="rgb(24,24,24)"/><rect x="672.5" y="422.8" width="2.1" height="2.1" fill="rgb(32,32,32)"/><rect x="863.2" y="212.2" width="2.1" height="2.1" fill="rgb(28,28,28)"/><rect x="1142.0" y="411.6" width="2.1" height="2.1" fill="rgb(20,20,20)"/><rect x="694.0" y="202.6" width="2.1" height="2.1" fill="rgb(48,48,48)"/><rect x="1171.2" y="225.0" width="2.1" height="2.1" fill="rgb(36,36,36)"/><rect x="919.2" y="38.2" width="2.1" height="2.1" fill="rgb(48,48,48)"/><rect x="942.8" y="222.6" width="2.1" height="2.1" fill="rgb(32,32,32)"/><rect x="939.4" y="322.5" width="2.1" height="2.1" fill="rgb(48,48,48)"/><rect x="1063.2" y="306.3" width="2.1" height="2.1" fill="rgb(48,48,48)"/><rect x="1170.7" y="43.7" width="2.1" height="2.1" fill="rgb(20,20,20)"/><rect x="1100.8" y="112.6" width="2.1" height="2.1" fill="rgb(42,42,42)"/><rect x="1059.0" y="453.5" width="2.1" height="2.1" fill="rgb(42,42,42)"/><rect x="771.4" y="301.1" width="2.1" height="2.1" fill="rgb(42,42,42)"/><rect x="1164.5" y="306.2" width="2.1" height="2.1" fill="rgb(20,20,20)"/><rect x="774.8" y="315.7" width="2.1" height="2.1" fill="rgb(28,28,28)"/><rect x="876.2" y="322.8" width="2.1" height="2.1" fill="rgb(24,24,24)"/><rect x="619.2" y="140.4" width="2.1" height="2.1" fill="rgb(20,20,20)"/><rect x="742.4" y="456.9" width="2.1" height="2.1" fill="rgb(28,28,28)"/><rect x="779.6" y="419.3" width="2.1" height="2.1" fill="rgb(20,20,20)"/><rect x="1206.1" y="235.5" width="2.1" height="2.1" fill="rgb(24,24,24)"/><rect x="1171.7" y="230.5" width="2.1" height="2.1" fill="rgb(42,42,42)"/><rect x="650.0" y="281.8" width="2.1" height="2.1" fill="rgb(32,32,32)"/><rect x="873.0" y="335.5" width="2.1" height="2.1" fill="rgb(24,24,24)"/><rect x="859.3" y="423.4" width="2.1" height="2.1" fill="rgb(28,28,28)"/><rect x="1070.0" y="469.8" width="2.1" height="2.1" fill="rgb(24,24,24)"/><rect x="819.5" y="90.6" width="2.1" height="2.1" fill="rgb(42,42,42)"/><rect x="905.4" y="149.6" width="2.1" height="2.1" fill="rgb(48,48,48)"/><rect x="1208.4" y="61.8" width="2.1" height="2.1" fill="rgb(24,24,24)"/><rect x="851.1" y="363.0" width="2.1" height="2.1" fill="rgb(28,28,28)"/><rect x="1125.5" y="206.0" width="2.1" height="2.1" fill="rgb(20,20,20)"/><rect x="892.2" y="155.0" width="2.1" height="2.1" fill="rgb(32,32,32)"/><rect x="633.8" y="195.8" width="2.1" height="2.1" fill="rgb(48,48,48)"/><rect x="1003.4" y="193.0" width="2.1" height="2.1" fill="rgb(32,32,32)"/><rect x="636.6" y="33.2" width="2.1" height="2.1" fill="rgb(28,28,28)"/><rect x="840.4" y="160.4" width="2.1" height="2.1" fill="rgb(20,20,20)"/><rect x="777.8" y="338.7" width="2.1" height="2.1" fill="rgb(28,28,28)"/><rect x="1188.9" y="142.9" width="2.1" height="2.1" fill="rgb(36,36,36)"/><rect x="1184.1" y="300.1" width="2.1" height="2.1" fill="rgb(20,20,20)"/><rect x="1209.2" y="449.5" width="2.1" height="2.1" fill="rgb(32,32,32)"/><rect x="1105.5" y="430.6" width="2.1" height="2.1" fill="rgb(48,48,48)"/><rect x="921.4" y="437.4" width="2.1" height="2.1" fill="rgb(24,24,24)"/><rect x="620.4" y="438.8" width="2.1" height="2.1" fill="rgb(28,28,28)"/><rect x="1125.9" y="364.9" width="2.1" height="2.1" fill="rgb(36,36,36)"/><rect x="761.6" y="406.2" width="2.1" height="2.1" fill="rgb(32,32,32)"/><rect x="839.7" y="369.3" width="2.1" height="2.1" fill="rgb(20,20,20)"/><rect x="932.9" y="186.9" width="2.1" height="2.1" fill="rgb(24,24,24)"/><rect x="958.2" y="156.1" width="2.1" height="2.1" fill="rgb(20,20,20)"/><rect x="674.9" y="236.8" width="2.1" height="2.1" fill="rgb(42,42,42)"/><rect x="901.2" y="420.2" width="2.1" height="2.1" fill="rgb(24,24,24)"/><rect x="1079.5" y="399.5" width="2.1" height="2.1" fill="rgb(42,42,42)"/><rect x="1086.7" y="368.1" width="2.1" height="2.1" fill="rgb(28,28,28)"/><rect x="797.4" y="268.7" width="2.1" height="2.1" fill="rgb(28,28,28)"/><rect x="638.0" y="6.1" width="2.1" height="2.1" fill="rgb(24,24,24)"/><rect x="1137.0" y="431.0" width="2.1" height="2.1" fill="rgb(20,20,20)"/><rect x="987.9" y="390.6" width="2.1" height="2.1" fill="rgb(24,24,24)"/><rect x="1192.6" y="177.8" width="2.1" height="2.1" fill="rgb(32,32,32)"/><rect x="989.5" y="365.9" width="2.1" height="2.1" fill="rgb(42,42,42)"/><rect x="987.2" y="308.3" width="2.1" height="2.1" fill="rgb(24,24,24)"/><rect x="1121.0" y="386.4" width="2.1" height="2.1" fill="rgb(32,32,32)"/><rect x="741.3" y="375.4" width="2.1" height="2.1" fill="rgb(36,36,36)"/><rect x="915.3" y="194.6" width="2.1" height="2.1" fill="rgb(48,48,48)"/><rect x="860.5" y="260.9" width="2.1" height="2.1" fill="rgb(42,42,42)"/><rect x="946.6" y="309.0" width="2.1" height="2.1" fill="rgb(32,32,32)"/><rect x="1046.8" y="195.4" width="2.1" height="2.1" fill="rgb(28,28,28)"/><rect x="1029.7" y="199.1" width="2.1" height="2.1" fill="rgb(20,20,20)"/><rect x="809.0" y="268.6" width="2.1" height="2.1" fill="rgb(28,28,28)"/><rect x="872.1" y="12.5" width="2.1" height="2.1" fill="rgb(48,48,48)"/><rect x="840.9" y="96.1" width="2.1" height="2.1" fill="rgb(24,24,24)"/><rect x="1200.0" y="206.8" width="2.1" height="2.1" fill="rgb(24,24,24)"/><rect x="878.2" y="387.1" width="2.1" height="2.1" fill="rgb(32,32,32)"/><rect x="973.8" y="174.3" width="2.1" height="2.1" fill="rgb(24,24,24)"/><rect x="624.2" y="261.6" width="2.1" height="2.1" fill="rgb(42,42,42)"/><rect x="1115.8" y="189.3" width="2.1" height="2.1" fill="rgb(36,36,36)"/><rect x="1114.8" y="455.5" width="2.1" height="2.1" fill="rgb(24,24,24)"/><rect x="802.3" y="395.0" width="2.1" height="2.1" fill="rgb(20,20,20)"/><rect x="1220.8" y="229.4" width="2.1" height="2.1" fill="rgb(20,20,20)"/><rect x="992.3" y="301.2" width="2.1" height="2.1" fill="rgb(20,20,20)"/><rect x="1176.5" y="293.7" width="2.1" height="2.1" fill="rgb(48,48,48)"/><rect x="1168.4" y="303.0" width="2.1" height="2.1" fill="rgb(48,48,48)"/><rect x="752.9" y="192.9" width="2.1" height="2.1" fill="rgb(48,48,48)"/><rect x="736.8" y="224.9" width="2.1" height="2.1" fill="rgb(36,36,36)"/><rect x="750.5" y="190.7" width="2.1" height="2.1" fill="rgb(36,36,36)"/><rect x="1217.8" y="384.9" width="2.1" height="2.1" fill="rgb(24,24,24)"/><rect x="640.5" y="266.6" width="2.1" height="2.1" fill="rgb(48,48,48)"/><rect x="1032.5" y="315.9" width="2.1" height="2.1" fill="rgb(28,28,28)"/><rect x="688.1" y="284.0" width="2.1" height="2.1" fill="rgb(36,36,36)"/><rect x="1142.2" y="367.4" width="2.1" height="2.1" fill="rgb(42,42,42)"/><rect x="875.9" y="276.1" width="2.1" height="2.1" fill="rgb(32,32,32)"/><rect x="726.0" y="5.6" width="2.1" height="2.1" fill="rgb(32,32,32)"/><rect x="761.1" y="360.6" width="2.1" height="2.1" fill="rgb(48,48,48)"/><rect x="1123.6" y="394.7" width="2.1" height="2.1" fill="rgb(48,48,48)"/><rect x="666.1" y="346.5" width="2.1" height="2.1" fill="rgb(48,48,48)"/><rect x="1062.4" y="41.3" width="2.1" height="2.1" fill="rgb(32,32,32)"/><rect x="1020.4" y="370.2" width="2.1" height="2.1" fill="rgb(20,20,20)"/><rect x="1147.2" y="469.2" width="2.1" height="2.1" fill="rgb(42,42,42)"/><rect x="1165.0" y="138.4" width="2.1" height="2.1" fill="rgb(48,48,48)"/><rect x="717.5" y="372.2" width="2.1" height="2.1" fill="rgb(24,24,24)"/><rect x="655.7" y="167.9" width="2.1" height="2.1" fill="rgb(24,24,24)"/><rect x="816.1" y="290.5" width="2.1" height="2.1" fill="rgb(48,48,48)"/><rect x="898.4" y="122.7" width="2.1" height="2.1" fill="rgb(32,32,32)"/><rect x="715.1" y="441.3" width="2.1" height="2.1" fill="rgb(42,42,42)"/><rect x="818.6" y="180.0" width="2.1" height="2.1" fill="rgb(28,28,28)"/><rect x="686.5" y="251.8" width="2.1" height="2.1" fill="rgb(42,42,42)"/><rect x="1148.0" y="455.2" width="2.1" height="2.1" fill="rgb(32,32,32)"/><rect x="959.8" y="274.9" width="2.1" height="2.1" fill="rgb(20,20,20)"/><rect x="771.5" y="254.2" width="2.1" height="2.1" fill="rgb(48,48,48)"/><rect x="859.8" y="376.5" width="2.1" height="2.1" fill="rgb(28,28,28)"/><rect x="997.1" y="451.4" width="2.1" height="2.1" fill="rgb(28,28,28)"/><rect x="1226.1" y="277.6" width="2.1" height="2.1" fill="rgb(42,42,42)"/><rect x="1171.2" y="346.3" width="2.1" height="2.1" fill="rgb(42,42,42)"/><rect x="883.4" y="243.4" width="2.1" height="2.1" fill="rgb(20,20,20)"/><rect x="977.4" y="279.1" width="2.1" height="2.1" fill="rgb(24,24,24)"/><rect x="842.4" y="390.9" width="2.1" height="2.1" fill="rgb(24,24,24)"/><rect x="698.7" y="441.4" width="2.1" height="2.1" fill="rgb(24,24,24)"/><rect x="1054.3" y="214.5" width="2.1" height="2.1" fill="rgb(20,20,20)"/><rect x="1011.3" y="410.9" width="2.1" height="2.1" fill="rgb(48,48,48)"/><rect x="782.5" y="383.0" width="2.1" height="2.1" fill="rgb(20,20,20)"/><rect x="649.9" y="387.4" width="2.1" height="2.1" fill="rgb(28,28,28)"/><rect x="984.3" y="274.1" width="2.1" height="2.1" fill="rgb(36,36,36)"/><rect x="1197.0" y="346.6" width="2.1" height="2.1" fill="rgb(24,24,24)"/><rect x="936.8" y="304.1" width="2.1" height="2.1" fill="rgb(42,42,42)"/><rect x="1013.4" y="383.8" width="2.1" height="2.1" fill="rgb(24,24,24)"/><rect x="1232.3" y="342.3" width="2.1" height="2.1" fill="rgb(32,32,32)"/><rect x="1059.3" y="7.0" width="2.1" height="2.1" fill="rgb(42,42,42)"/><rect x="723.9" y="469.4" width="2.1" height="2.1" fill="rgb(28,28,28)"/><rect x="1080.5" y="328.6" width="2.1" height="2.1" fill="rgb(48,48,48)"/><rect x="1036.8" y="324.2" width="2.1" height="2.1" fill="rgb(36,36,36)"/><rect x="1218.5" y="142.1" width="2.1" height="2.1" fill="rgb(24,24,24)"/><rect x="668.0" y="241.0" width="2.1" height="2.1" fill="rgb(24,24,24)"/><rect x="776.7" y="114.3" width="2.1" height="2.1" fill="rgb(24,24,24)"/><rect x="1078.4" y="156.6" width="2.1" height="2.1" fill="rgb(28,28,28)"/><rect x="988.4" y="181.2" width="2.1" height="2.1" fill="rgb(42,42,42)"/><rect x="1224.6" y="397.0" width="2.1" height="2.1" fill="rgb(36,36,36)"/><rect x="906.6" y="396.1" width="2.1" height="2.1" fill="rgb(42,42,42)"/><rect x="619.0" y="16.4" width="2.1" height="2.1" fill="rgb(24,24,24)"/><rect x="1001.6" y="40.3" width="2.1" height="2.1" fill="rgb(24,24,24)"/><rect x="715.5" y="460.4" width="2.1" height="2.1" fill="rgb(42,42,42)"/><rect x="1008.6" y="329.5" width="2.1" height="2.1" fill="rgb(42,42,42)"/><rect x="715.5" y="444.5" width="2.1" height="2.1" fill="rgb(34,34,34)"/><rect x="798.8" y="462.6" width="2.1" height="2.1" fill="rgb(46,46,46)"/><rect x="1176.6" y="298.2" width="2.1" height="2.1" fill="rgb(54,54,54)"/><rect x="1205.6" y="305.8" width="2.1" height="2.1" fill="rgb(28,28,28)"/><rect x="800.9" y="292.3" width="2.1" height="2.1" fill="rgb(54,54,54)"/><rect x="737.8" y="425.0" width="2.1" height="2.1" fill="rgb(54,54,54)"/><rect x="846.9" y="304.5" width="2.1" height="2.1" fill="rgb(24,24,24)"/><rect x="1122.4" y="405.6" width="2.1" height="2.1" fill="rgb(34,34,34)"/><rect x="864.2" y="364.4" width="2.1" height="2.1" fill="rgb(24,24,24)"/><rect x="881.6" y="458.1" width="2.1" height="2.1" fill="rgb(24,24,24)"/><rect x="1080.8" y="354.1" width="2.1" height="2.1" fill="rgb(34,34,34)"/><rect x="1110.0" y="397.4" width="2.1" height="2.1" fill="rgb(40,40,40)"/><rect x="1154.9" y="400.4" width="2.1" height="2.1" fill="rgb(24,24,24)"/><rect x="1120.8" y="291.8" width="2.1" height="2.1" fill="rgb(46,46,46)"/><rect x="1112.1" y="350.2" width="2.1" height="2.1" fill="rgb(54,54,54)"/><rect x="716.3" y="390.7" width="2.1" height="2.1" fill="rgb(54,54,54)"/><rect x="1160.8" y="302.8" width="2.1" height="2.1" fill="rgb(34,34,34)"/><rect x="783.0" y="286.2" width="2.1" height="2.1" fill="rgb(28,28,28)"/><rect x="847.4" y="424.8" width="2.1" height="2.1" fill="rgb(24,24,24)"/><rect x="692.4" y="376.8" width="2.1" height="2.1" fill="rgb(40,40,40)"/><rect x="1069.6" y="438.7" width="2.1" height="2.1" fill="rgb(40,40,40)"/><rect x="1013.5" y="463.1" width="2.1" height="2.1" fill="rgb(46,46,46)"/><rect x="832.3" y="460.6" width="2.1" height="2.1" fill="rgb(34,34,34)"/><rect x="1135.1" y="459.6" width="2.1" height="2.1" fill="rgb(28,28,28)"/><rect x="962.1" y="306.3" width="2.1" height="2.1" fill="rgb(54,54,54)"/><rect x="1108.7" y="376.7" width="2.1" height="2.1" fill="rgb(54,54,54)"/><rect x="996.4" y="305.3" width="2.1" height="2.1" fill="rgb(34,34,34)"/><rect x="884.2" y="360.2" width="2.1" height="2.1" fill="rgb(40,40,40)"/><rect x="1176.9" y="423.9" width="2.1" height="2.1" fill="rgb(40,40,40)"/><rect x="1175.1" y="290.7" width="2.1" height="2.1" fill="rgb(28,28,28)"/><rect x="855.5" y="365.2" width="2.1" height="2.1" fill="rgb(46,46,46)"/><rect x="963.6" y="356.2" width="2.1" height="2.1" fill="rgb(54,54,54)"/><rect x="817.5" y="371.3" width="2.1" height="2.1" fill="rgb(46,46,46)"/><rect x="1014.4" y="413.5" width="2.1" height="2.1" fill="rgb(46,46,46)"/><rect x="1042.9" y="350.5" width="2.1" height="2.1" fill="rgb(34,34,34)"/><rect x="974.9" y="446.6" width="2.1" height="2.1" fill="rgb(40,40,40)"/><rect x="1051.5" y="423.3" width="2.1" height="2.1" fill="rgb(28,28,28)"/><rect x="942.9" y="413.5" width="2.1" height="2.1" fill="rgb(34,34,34)"/><rect x="1006.2" y="309.3" width="2.1" height="2.1" fill="rgb(40,40,40)"/><rect x="1040.9" y="414.9" width="2.1" height="2.1" fill="rgb(46,46,46)"/><rect x="794.6" y="341.8" width="2.1" height="2.1" fill="rgb(54,54,54)"/><rect x="1141.3" y="400.2" width="2.1" height="2.1" fill="rgb(54,54,54)"/><rect x="775.2" y="331.8" width="2.1" height="2.1" fill="rgb(34,34,34)"/><rect x="1019.2" y="350.5" width="2.1" height="2.1" fill="rgb(28,28,28)"/><rect x="869.1" y="321.0" width="2.1" height="2.1" fill="rgb(54,54,54)"/><rect x="1233.2" y="316.5" width="2.1" height="2.1" fill="rgb(54,54,54)"/><rect x="745.5" y="357.1" width="2.1" height="2.1" fill="rgb(28,28,28)"/><rect x="1124.0" y="421.7" width="2.1" height="2.1" fill="rgb(40,40,40)"/><rect x="839.5" y="306.2" width="2.1" height="2.1" fill="rgb(24,24,24)"/><rect x="843.3" y="449.8" width="2.1" height="2.1" fill="rgb(40,40,40)"/><rect x="708.5" y="359.8" width="2.1" height="2.1" fill="rgb(40,40,40)"/><rect x="1068.6" y="378.6" width="2.1" height="2.1" fill="rgb(54,54,54)"/><rect x="851.7" y="290.1" width="2.1" height="2.1" fill="rgb(34,34,34)"/><rect x="1019.6" y="360.9" width="2.1" height="2.1" fill="rgb(54,54,54)"/><rect x="822.3" y="443.8" width="2.1" height="2.1" fill="rgb(54,54,54)"/><rect x="1003.4" y="424.6" width="2.1" height="2.1" fill="rgb(40,40,40)"/><rect x="1151.9" y="409.6" width="2.1" height="2.1" fill="rgb(54,54,54)"/><rect x="1170.5" y="429.2" width="2.1" height="2.1" fill="rgb(54,54,54)"/><rect x="1008.7" y="328.3" width="2.1" height="2.1" fill="rgb(28,28,28)"/><rect x="1040.3" y="370.0" width="2.1" height="2.1" fill="rgb(34,34,34)"/><rect x="831.9" y="415.6" width="2.1" height="2.1" fill="rgb(40,40,40)"/><rect x="822.3" y="360.0" width="2.1" height="2.1" fill="rgb(54,54,54)"/><rect x="1033.8" y="332.3" width="2.1" height="2.1" fill="rgb(40,40,40)"/><rect x="953.6" y="289.6" width="2.1" height="2.1" fill="rgb(40,40,40)"/><rect x="973.0" y="408.3" width="2.1" height="2.1" fill="rgb(28,28,28)"/><rect x="1178.4" y="346.7" width="2.1" height="2.1" fill="rgb(24,24,24)"/><rect x="902.2" y="376.6" width="2.1" height="2.1" fill="rgb(24,24,24)"/><rect x="710.8" y="386.5" width="2.1" height="2.1" fill="rgb(28,28,28)"/><rect x="1081.1" y="462.0" width="2.1" height="2.1" fill="rgb(28,28,28)"/><rect x="973.5" y="304.7" width="2.1" height="2.1" fill="rgb(46,46,46)"/><rect x="939.4" y="323.9" width="2.1" height="2.1" fill="rgb(40,40,40)"/><rect x="969.7" y="404.3" width="2.1" height="2.1" fill="rgb(34,34,34)"/><rect x="974.8" y="361.9" width="2.1" height="2.1" fill="rgb(40,40,40)"/><rect x="804.7" y="412.6" width="2.1" height="2.1" fill="rgb(40,40,40)"/><rect x="970.5" y="458.5" width="2.1" height="2.1" fill="rgb(54,54,54)"/><rect x="1227.5" y="351.8" width="2.1" height="2.1" fill="rgb(24,24,24)"/><rect x="827.8" y="356.6" width="2.1" height="2.1" fill="rgb(24,24,24)"/><rect x="697.3" y="363.4" width="2.1" height="2.1" fill="rgb(40,40,40)"/><rect x="1033.2" y="410.9" width="2.1" height="2.1" fill="rgb(46,46,46)"/><rect x="834.8" y="327.5" width="2.1" height="2.1" fill="rgb(54,54,54)"/><rect x="908.7" y="462.4" width="2.1" height="2.1" fill="rgb(28,28,28)"/><rect x="1232.8" y="463.8" width="2.1" height="2.1" fill="rgb(40,40,40)"/><rect x="805.8" y="309.9" width="2.1" height="2.1" fill="rgb(24,24,24)"/><rect x="1132.0" y="403.3" width="2.1" height="2.1" fill="rgb(40,40,40)"/><rect x="1040.6" y="419.3" width="2.1" height="2.1" fill="rgb(28,28,28)"/><rect x="882.8" y="404.2" width="2.1" height="2.1" fill="rgb(40,40,40)"/><rect x="945.6" y="340.5" width="2.1" height="2.1" fill="rgb(46,46,46)"/><rect x="1044.7" y="430.3" width="2.1" height="2.1" fill="rgb(40,40,40)"/><rect x="883.7" y="443.4" width="2.1" height="2.1" fill="rgb(34,34,34)"/><rect x="1074.5" y="413.2" width="2.1" height="2.1" fill="rgb(40,40,40)"/><rect x="1060.6" y="375.1" width="2.1" height="2.1" fill="rgb(54,54,54)"/><rect x="1126.2" y="352.2" width="2.1" height="2.1" fill="rgb(54,54,54)"/><rect x="854.8" y="374.7" width="2.1" height="2.1" fill="rgb(40,40,40)"/><rect x="1030.4" y="301.8" width="2.1" height="2.1" fill="rgb(34,34,34)"/><rect x="773.4" y="342.1" width="2.1" height="2.1" fill="rgb(40,40,40)"/><rect x="721.2" y="439.2" width="2.1" height="2.1" fill="rgb(34,34,34)"/><rect x="1118.1" y="312.0" width="2.1" height="2.1" fill="rgb(34,34,34)"/><rect x="1035.7" y="288.8" width="2.1" height="2.1" fill="rgb(24,24,24)"/><rect x="804.5" y="299.3" width="2.1" height="2.1" fill="rgb(34,34,34)"/><rect x="826.5" y="304.8" width="2.1" height="2.1" fill="rgb(28,28,28)"/><rect x="1156.4" y="320.3" width="2.1" height="2.1" fill="rgb(40,40,40)"/><rect x="879.2" y="314.2" width="2.1" height="2.1" fill="rgb(40,40,40)"/><rect x="1122.3" y="317.1" width="2.1" height="2.1" fill="rgb(54,54,54)"/><rect x="1022.2" y="430.5" width="2.1" height="2.1" fill="rgb(54,54,54)"/><rect x="1182.3" y="387.5" width="2.1" height="2.1" fill="rgb(54,54,54)"/><rect x="1148.0" y="322.5" width="2.1" height="2.1" fill="rgb(54,54,54)"/><rect x="806.4" y="300.5" width="2.1" height="2.1" fill="rgb(40,40,40)"/><rect x="1056.5" y="307.6" width="2.1" height="2.1" fill="rgb(24,24,24)"/><rect x="834.4" y="329.3" width="2.1" height="2.1" fill="rgb(28,28,28)"/><rect x="948.4" y="389.1" width="2.1" height="2.1" fill="rgb(40,40,40)"/><rect x="945.0" y="312.7" width="2.1" height="2.1" fill="rgb(40,40,40)"/><rect x="824.6" y="316.5" width="2.1" height="2.1" fill="rgb(46,46,46)"/><rect x="1161.1" y="287.2" width="2.1" height="2.1" fill="rgb(34,34,34)"/><rect x="945.5" y="390.1" width="2.1" height="2.1" fill="rgb(54,54,54)"/><rect x="852.1" y="372.2" width="2.1" height="2.1" fill="rgb(40,40,40)"/><rect x="918.7" y="463.7" width="2.1" height="2.1" fill="rgb(24,24,24)"/><rect x="788.6" y="352.7" width="2.1" height="2.1" fill="rgb(54,54,54)"/><rect x="705.6" y="398.8" width="2.1" height="2.1" fill="rgb(54,54,54)"/><rect x="1092.2" y="470.8" width="2.1" height="2.1" fill="rgb(24,24,24)"/><rect x="968.8" y="375.7" width="2.1" height="2.1" fill="rgb(28,28,28)"/><rect x="708.5" y="418.9" width="2.1" height="2.1" fill="rgb(54,54,54)"/><rect x="759.3" y="303.5" width="2.1" height="2.1" fill="rgb(54,54,54)"/><rect x="889.9" y="373.8" width="2.1" height="2.1" fill="rgb(46,46,46)"/><rect x="992.6" y="454.8" width="2.1" height="2.1" fill="rgb(34,34,34)"/><rect x="927.6" y="364.1" width="2.1" height="2.1" fill="rgb(46,46,46)"/><rect x="718.8" y="339.5" width="2.1" height="2.1" fill="rgb(34,34,34)"/><rect x="1141.9" y="360.7" width="2.1" height="2.1" fill="rgb(46,46,46)"/><rect x="1227.4" y="447.5" width="2.1" height="2.1" fill="rgb(34,34,34)"/><rect x="1222.3" y="407.1" width="2.1" height="2.1" fill="rgb(24,24,24)"/><rect x="870.7" y="344.7" width="2.1" height="2.1" fill="rgb(34,34,34)"/><rect x="759.7" y="466.0" width="2.1" height="2.1" fill="rgb(24,24,24)"/><rect x="1118.2" y="293.4" width="2.1" height="2.1" fill="rgb(54,54,54)"/><rect x="992.6" y="361.1" width="2.1" height="2.1" fill="rgb(46,46,46)"/><rect x="717.1" y="341.6" width="2.1" height="2.1" fill="rgb(24,24,24)"/><rect x="715.3" y="438.1" width="2.1" height="2.1" fill="rgb(40,40,40)"/><rect x="1022.3" y="407.7" width="2.1" height="2.1" fill="rgb(46,46,46)"/><rect x="1186.8" y="399.2" width="2.1" height="2.1" fill="rgb(46,46,46)"/><rect x="770.3" y="410.6" width="2.1" height="2.1" fill="rgb(54,54,54)"/><rect x="1015.6" y="412.0" width="2.1" height="2.1" fill="rgb(28,28,28)"/><rect x="711.6" y="403.2" width="2.1" height="2.1" fill="rgb(54,54,54)"/><rect x="1106.4" y="304.8" width="2.1" height="2.1" fill="rgb(28,28,28)"/><rect x="1164.6" y="364.0" width="2.1" height="2.1" fill="rgb(24,24,24)"/><rect x="1189.1" y="407.3" width="2.1" height="2.1" fill="rgb(34,34,34)"/><rect x="1166.1" y="311.7" width="2.1" height="2.1" fill="rgb(34,34,34)"/><rect x="996.9" y="333.7" width="2.1" height="2.1" fill="rgb(34,34,34)"/><rect x="790.9" y="292.3" width="2.1" height="2.1" fill="rgb(24,24,24)"/><rect x="925.1" y="404.7" width="2.1" height="2.1" fill="rgb(24,24,24)"/><rect x="961.8" y="382.6" width="2.1" height="2.1" fill="rgb(24,24,24)"/><rect x="1112.5" y="363.9" width="2.1" height="2.1" fill="rgb(54,54,54)"/><rect x="1191.6" y="368.6" width="2.1" height="2.1" fill="rgb(24,24,24)"/><rect x="1061.3" y="395.9" width="2.1" height="2.1" fill="rgb(54,54,54)"/><rect x="1225.5" y="374.0" width="2.1" height="2.1" fill="rgb(40,40,40)"/><rect x="989.6" y="301.3" width="2.1" height="2.1" fill="rgb(40,40,40)"/><rect x="805.9" y="314.1" width="2.1" height="2.1" fill="rgb(24,24,24)"/><rect x="923.1" y="287.7" width="2.1" height="2.1" fill="rgb(54,54,54)"/><rect x="756.4" y="464.8" width="2.1" height="2.1" fill="rgb(24,24,24)"/><rect x="809.2" y="308.4" width="2.1" height="2.1" fill="rgb(40,40,40)"/><rect x="699.7" y="419.1" width="2.1" height="2.1" fill="rgb(28,28,28)"/><rect x="936.1" y="423.7" width="2.1" height="2.1" fill="rgb(24,24,24)"/><rect x="889.8" y="424.2" width="2.1" height="2.1" fill="rgb(54,54,54)"/><rect x="1126.1" y="172.0" width="2.1" height="2.1" fill="rgb(69,69,69)"/><rect x="1132.3" y="165.4" width="2.1" height="2.1" fill="rgb(79,79,79)"/><rect x="1134.8" y="165.8" width="2.1" height="2.1" fill="rgb(50,50,50)"/><rect x="1144.0" y="160.8" width="2.1" height="2.1" fill="rgb(70,70,70)"/><rect x="1147.4" y="157.4" width="2.1" height="2.1" fill="rgb(50,50,50)"/><rect x="1150.2" y="155.9" width="2.1" height="2.1" fill="rgb(57,57,57)"/><rect x="1153.8" y="151.7" width="2.1" height="2.1" fill="rgb(78,78,78)"/><rect x="1156.5" y="152.6" width="2.1" height="2.1" fill="rgb(49,49,49)"/><rect x="1159.8" y="149.9" width="2.1" height="2.1" fill="rgb(64,64,64)"/><rect x="1161.6" y="148.4" width="2.1" height="2.1" fill="rgb(54,54,54)"/><rect x="1164.4" y="144.7" width="2.1" height="2.1" fill="rgb(67,67,67)"/><rect x="1168.5" y="144.6" width="2.1" height="2.1" fill="rgb(42,42,42)"/><rect x="1168.5" y="143.7" width="2.1" height="2.1" fill="rgb(76,76,76)"/><rect x="1172.4" y="142.2" width="2.1" height="2.1" fill="rgb(75,75,75)"/><rect x="1175.9" y="137.9" width="2.1" height="2.1" fill="rgb(64,64,64)"/><rect x="1179.4" y="137.5" width="2.1" height="2.1" fill="rgb(54,54,54)"/><rect x="1179.6" y="135.0" width="2.1" height="2.1" fill="rgb(53,53,53)"/><rect x="1183.2" y="132.5" width="2.1" height="2.1" fill="rgb(74,74,74)"/><rect x="1187.0" y="132.2" width="2.1" height="2.1" fill="rgb(54,54,54)"/><rect x="1188.2" y="129.7" width="2.1" height="2.1" fill="rgb(73,73,73)"/><rect x="1190.0" y="128.3" width="2.1" height="2.1" fill="rgb(53,53,53)"/><rect x="1191.1" y="128.2" width="2.1" height="2.1" fill="rgb(63,63,63)"/><rect x="1193.4" y="127.2" width="2.1" height="2.1" fill="rgb(49,49,49)"/><rect x="1196.6" y="125.2" width="2.1" height="2.1" fill="rgb(46,46,46)"/><rect x="1197.4" y="123.0" width="2.1" height="2.1" fill="rgb(60,60,60)"/><rect x="1199.0" y="122.8" width="2.1" height="2.1" fill="rgb(41,41,41)"/><rect x="1200.5" y="122.4" width="2.1" height="2.1" fill="rgb(76,76,76)"/><rect x="1203.3" y="119.7" width="2.1" height="2.1" fill="rgb(57,57,57)"/><rect x="1206.1" y="119.6" width="2.1" height="2.1" fill="rgb(78,78,78)"/><rect x="1207.6" y="115.8" width="2.1" height="2.1" fill="rgb(51,51,51)"/><rect x="1209.5" y="114.1" width="2.1" height="2.1" fill="rgb(63,63,63)"/><rect x="1215.4" y="113.7" width="2.1" height="2.1" fill="rgb(44,44,44)"/><rect x="1158.8" y="198.0" width="2.1" height="2.1" fill="rgb(40,40,40)"/><rect x="1165.4" y="195.8" width="2.1" height="2.1" fill="rgb(50,50,50)"/><rect x="1168.6" y="194.6" width="2.1" height="2.1" fill="rgb(57,57,57)"/><rect x="1172.0" y="193.4" width="2.1" height="2.1" fill="rgb(38,38,38)"/><rect x="1174.0" y="194.4" width="2.1" height="2.1" fill="rgb(65,65,65)"/><rect x="1175.2" y="193.8" width="2.1" height="2.1" fill="rgb(47,47,47)"/><rect x="1180.5" y="192.4" width="2.1" height="2.1" fill="rgb(41,41,41)"/><rect x="1182.1" y="190.8" width="2.1" height="2.1" fill="rgb(58,58,58)"/><rect x="1183.7" y="189.8" width="2.1" height="2.1" fill="rgb(44,44,44)"/><rect x="1191.8" y="189.1" width="2.1" height="2.1" fill="rgb(45,45,45)"/><rect x="1196.0" y="187.9" width="2.1" height="2.1" fill="rgb(43,43,43)"/><rect x="1202.6" y="183.2" width="2.1" height="2.1" fill="rgb(56,56,56)"/><rect x="1205.2" y="182.5" width="2.1" height="2.1" fill="rgb(58,58,58)"/><rect x="1207.4" y="181.7" width="2.1" height="2.1" fill="rgb(63,63,63)"/><rect x="1213.3" y="180.8" width="2.1" height="2.1" fill="rgb(61,61,61)"/><rect x="1213.4" y="180.8" width="2.1" height="2.1" fill="rgb(53,53,53)"/><rect x="1216.0" y="179.9" width="2.1" height="2.1" fill="rgb(55,55,55)"/><rect x="1218.9" y="178.4" width="2.1" height="2.1" fill="rgb(67,67,67)"/><rect x="1222.1" y="178.9" width="2.1" height="2.1" fill="rgb(48,48,48)"/><rect x="1228.3" y="177.5" width="2.1" height="2.1" fill="rgb(62,62,62)"/><rect x="863.5" y="341.2" width="2.1" height="2.1" fill="rgb(58,58,58)"/><rect x="870.3" y="335.9" width="2.1" height="2.1" fill="rgb(87,87,87)"/><rect x="871.1" y="333.6" width="2.1" height="2.1" fill="rgb(88,88,88)"/><rect x="873.7" y="332.6" width="2.1" height="2.1" fill="rgb(81,81,81)"/><rect x="876.2" y="331.6" width="2.1" height="2.1" fill="rgb(66,66,66)"/><rect x="877.4" y="330.6" width="2.1" height="2.1" fill="rgb(93,93,93)"/><rect x="879.0" y="330.4" width="2.1" height="2.1" fill="rgb(86,86,86)"/><rect x="881.2" y="328.1" width="2.1" height="2.1" fill="rgb(97,97,97)"/><rect x="884.9" y="328.3" width="2.1" height="2.1" fill="rgb(67,67,67)"/><rect x="886.7" y="327.3" width="2.1" height="2.1" fill="rgb(101,101,101)"/><rect x="890.2" y="325.0" width="2.1" height="2.1" fill="rgb(95,95,95)"/><rect x="893.7" y="324.8" width="2.1" height="2.1" fill="rgb(85,85,85)"/><rect x="897.4" y="322.4" width="2.1" height="2.1" fill="rgb(91,91,91)"/><rect x="901.4" y="321.9" width="2.1" height="2.1" fill="rgb(93,93,93)"/><rect x="908.4" y="322.5" width="2.1" height="2.1" fill="rgb(59,59,59)"/><rect x="910.5" y="321.8" width="2.1" height="2.1" fill="rgb(75,75,75)"/><rect x="913.3" y="322.0" width="2.1" height="2.1" fill="rgb(58,58,58)"/><rect x="913.9" y="323.2" width="2.1" height="2.1" fill="rgb(83,83,83)"/><rect x="917.3" y="323.5" width="2.1" height="2.1" fill="rgb(56,56,56)"/><rect x="918.6" y="324.5" width="2.1" height="2.1" fill="rgb(65,65,65)"/><rect x="921.4" y="325.8" width="2.1" height="2.1" fill="rgb(56,56,56)"/><rect x="925.2" y="326.7" width="2.1" height="2.1" fill="rgb(71,71,71)"/><rect x="926.6" y="327.5" width="2.1" height="2.1" fill="rgb(88,88,88)"/><rect x="928.4" y="328.1" width="2.1" height="2.1" fill="rgb(61,61,61)"/><rect x="929.6" y="328.8" width="2.1" height="2.1" fill="rgb(86,86,86)"/><rect x="933.5" y="329.9" width="2.1" height="2.1" fill="rgb(62,62,62)"/><rect x="934.1" y="332.2" width="2.1" height="2.1" fill="rgb(69,69,69)"/><rect x="937.7" y="332.4" width="2.1" height="2.1" fill="rgb(65,65,65)"/><rect x="942.8" y="332.0" width="2.1" height="2.1" fill="rgb(93,93,93)"/><rect x="947.2" y="332.2" width="2.1" height="2.1" fill="rgb(104,104,104)"/><rect x="949.8" y="331.8" width="2.1" height="2.1" fill="rgb(100,100,100)"/><rect x="953.4" y="331.3" width="2.1" height="2.1" fill="rgb(75,75,75)"/><rect x="959.1" y="330.3" width="2.1" height="2.1" fill="rgb(77,77,77)"/><rect x="961.2" y="329.0" width="2.1" height="2.1" fill="rgb(78,78,78)"/><rect x="962.9" y="327.9" width="2.1" height="2.1" fill="rgb(67,67,67)"/><rect x="964.8" y="327.0" width="2.1" height="2.1" fill="rgb(80,80,80)"/><rect x="969.2" y="327.7" width="2.1" height="2.1" fill="rgb(57,57,57)"/><rect x="970.8" y="326.3" width="2.1" height="2.1" fill="rgb(98,98,98)"/><rect x="973.0" y="327.2" width="2.1" height="2.1" fill="rgb(57,57,57)"/><rect x="974.4" y="326.0" width="2.1" height="2.1" fill="rgb(82,82,82)"/><rect x="976.2" y="324.6" width="2.1" height="2.1" fill="rgb(77,77,77)"/><rect x="978.6" y="325.3" width="2.1" height="2.1" fill="rgb(87,87,87)"/><rect x="984.3" y="325.2" width="2.1" height="2.1" fill="rgb(83,83,83)"/><rect x="985.5" y="323.2" width="2.1" height="2.1" fill="rgb(81,81,81)"/><rect x="988.1" y="323.8" width="2.1" height="2.1" fill="rgb(102,102,102)"/><rect x="991.7" y="323.1" width="2.1" height="2.1" fill="rgb(91,91,91)"/><rect x="992.9" y="322.5" width="2.1" height="2.1" fill="rgb(78,78,78)"/><rect x="995.6" y="322.2" width="2.1" height="2.1" fill="rgb(85,85,85)"/><rect x="999.6" y="320.3" width="2.1" height="2.1" fill="rgb(89,89,89)"/><rect x="1002.4" y="319.5" width="2.1" height="2.1" fill="rgb(77,77,77)"/><rect x="1005.5" y="320.0" width="2.1" height="2.1" fill="rgb(75,75,75)"/><rect x="1006.1" y="321.3" width="2.1" height="2.1" fill="rgb(73,73,73)"/><rect x="1007.7" y="319.9" width="2.1" height="2.1" fill="rgb(93,93,93)"/><rect x="1012.1" y="318.9" width="2.1" height="2.1" fill="rgb(83,83,83)"/><rect x="1016.0" y="319.0" width="2.1" height="2.1" fill="rgb(98,98,98)"/><rect x="1016.8" y="318.2" width="2.1" height="2.1" fill="rgb(77,77,77)"/><rect x="1019.1" y="318.6" width="2.1" height="2.1" fill="rgb(72,72,72)"/><rect x="957.9" y="310.7" width="2.1" height="2.1" fill="rgb(80,80,80)"/><rect x="959.9" y="310.6" width="2.1" height="2.1" fill="rgb(58,58,58)"/><rect x="961.0" y="310.2" width="2.1" height="2.1" fill="rgb(85,85,85)"/><rect x="964.2" y="311.7" width="2.1" height="2.1" fill="rgb(86,86,86)"/><rect x="967.4" y="310.2" width="2.1" height="2.1" fill="rgb(89,89,89)"/><rect x="968.6" y="310.8" width="2.1" height="2.1" fill="rgb(79,79,79)"/><rect x="970.8" y="310.7" width="2.1" height="2.1" fill="rgb(83,83,83)"/><rect x="973.2" y="310.8" width="2.1" height="2.1" fill="rgb(81,81,81)"/><rect x="975.3" y="311.5" width="2.1" height="2.1" fill="rgb(59,59,59)"/><rect x="977.8" y="310.9" width="2.1" height="2.1" fill="rgb(71,71,71)"/><rect x="981.2" y="312.5" width="2.1" height="2.1" fill="rgb(70,70,70)"/><rect x="982.5" y="312.8" width="2.1" height="2.1" fill="rgb(50,50,50)"/><rect x="984.4" y="313.0" width="2.1" height="2.1" fill="rgb(69,69,69)"/><rect x="993.1" y="313.0" width="2.1" height="2.1" fill="rgb(83,83,83)"/><rect x="996.5" y="312.4" width="2.1" height="2.1" fill="rgb(72,72,72)"/><rect x="997.7" y="312.8" width="2.1" height="2.1" fill="rgb(64,64,64)"/><rect x="1000.9" y="313.9" width="2.1" height="2.1" fill="rgb(85,85,85)"/><rect x="1005.0" y="314.6" width="2.1" height="2.1" fill="rgb(75,75,75)"/><rect x="1008.4" y="316.3" width="2.1" height="2.1" fill="rgb(71,71,71)"/><rect x="1011.0" y="314.4" width="2.1" height="2.1" fill="rgb(73,73,73)"/><rect x="1013.8" y="316.5" width="2.1" height="2.1" fill="rgb(82,82,82)"/><rect x="760.4" y="357.5" width="2.1" height="2.1" fill="rgb(45,45,45)"/><rect x="768.3" y="357.5" width="2.1" height="2.1" fill="rgb(51,51,51)"/><rect x="772.4" y="357.8" width="2.1" height="2.1" fill="rgb(36,36,36)"/><rect x="779.5" y="358.3" width="2.1" height="2.1" fill="rgb(36,36,36)"/><rect x="781.7" y="358.5" width="2.1" height="2.1" fill="rgb(52,52,52)"/><rect x="784.7" y="358.8" width="2.1" height="2.1" fill="rgb(53,53,53)"/><rect x="786.4" y="357.2" width="2.1" height="2.1" fill="rgb(59,59,59)"/><rect x="792.4" y="358.1" width="2.1" height="2.1" fill="rgb(39,39,39)"/><rect x="795.8" y="357.2" width="2.1" height="2.1" fill="rgb(59,59,59)"/><rect x="800.2" y="359.1" width="2.1" height="2.1" fill="rgb(50,50,50)"/><rect x="809.2" y="358.6" width="2.1" height="2.1" fill="rgb(45,45,45)"/><rect x="812.1" y="357.5" width="2.1" height="2.1" fill="rgb(36,36,36)"/><rect x="785.0" y="376.0" width="2.1" height="2.1" fill="rgb(48,48,48)"/><rect x="785.5" y="376.9" width="2.1" height="2.1" fill="rgb(30,30,30)"/><rect x="789.0" y="378.9" width="2.1" height="2.1" fill="rgb(60,60,60)"/><rect x="784.8" y="379.4" width="2.1" height="2.1" fill="rgb(37,37,37)"/><rect x="789.2" y="384.7" width="2.1" height="2.1" fill="rgb(40,40,40)"/><rect x="788.8" y="385.0" width="2.1" height="2.1" fill="rgb(43,43,43)"/><rect x="789.2" y="390.6" width="2.1" height="2.1" fill="rgb(42,42,42)"/><rect x="786.5" y="399.6" width="2.1" height="2.1" fill="rgb(30,30,30)"/><rect x="785.4" y="402.4" width="2.1" height="2.1" fill="rgb(35,35,35)"/><rect x="788.9" y="404.8" width="2.1" height="2.1" fill="rgb(41,41,41)"/><rect x="787.2" y="407.0" width="2.1" height="2.1" fill="rgb(42,42,42)"/><rect x="807.5" y="453.4" width="2.1" height="2.1" fill="rgb(47,47,47)"/><rect x="807.5" y="454.9" width="2.1" height="2.1" fill="rgb(36,36,36)"/><rect x="808.4" y="458.5" width="2.1" height="2.1" fill="rgb(42,42,42)"/><rect x="812.4" y="462.8" width="2.1" height="2.1" fill="rgb(39,39,39)"/><rect x="814.9" y="464.7" width="2.1" height="2.1" fill="rgb(42,42,42)"/><rect x="1082.6" y="286.5" width="2.1" height="2.1" fill="rgb(52,52,52)"/><rect x="1083.3" y="290.3" width="2.1" height="2.1" fill="rgb(46,46,46)"/><rect x="1084.1" y="291.7" width="2.1" height="2.1" fill="rgb(62,62,62)"/><rect x="1084.9" y="298.2" width="2.1" height="2.1" fill="rgb(57,57,57)"/><rect x="1085.7" y="298.5" width="2.1" height="2.1" fill="rgb(67,67,67)"/><rect x="1087.4" y="306.4" width="2.1" height="2.1" fill="rgb(64,64,64)"/><rect x="1092.4" y="361.2" width="2.1" height="2.1" fill="rgb(54,54,54)"/><rect x="1092.7" y="363.7" width="2.1" height="2.1" fill="rgb(69,69,69)"/><rect x="1092.9" y="366.9" width="2.1" height="2.1" fill="rgb(62,62,62)"/><rect x="1093.8" y="375.9" width="2.1" height="2.1" fill="rgb(54,54,54)"/><rect x="1094.0" y="378.7" width="2.1" height="2.1" fill="rgb(57,57,57)"/><rect x="1094.1" y="384.0" width="2.1" height="2.1" fill="rgb(72,72,72)"/><rect x="1159.5" y="244.9" width="2.1" height="2.1" fill="rgb(56,56,56)"/><rect x="1168.5" y="250.7" width="2.1" height="2.1" fill="rgb(47,47,47)"/><rect x="1170.3" y="251.2" width="2.1" height="2.1" fill="rgb(38,38,38)"/><rect x="1172.3" y="252.5" width="2.1" height="2.1" fill="rgb(56,56,56)"/><rect x="1172.9" y="253.6" width="2.1" height="2.1" fill="rgb(41,41,41)"/><rect x="1178.6" y="256.9" width="2.1" height="2.1" fill="rgb(55,55,55)"/><rect x="1092.0" y="387.0" width="2.2" height="2.2" fill="rgb(114,114,114)"/><rect x="1100.0" y="387.0" width="2.2" height="2.2" fill="rgb(140,140,140)"/><rect x="1095.5" y="387.0" width="2.2" height="2.2" fill="rgb(119,119,119)"/><rect x="1097.6" y="387.0" width="2.2" height="2.2" fill="rgb(113,113,113)"/><rect x="1092.0" y="389.1" width="2.2" height="2.2" fill="rgb(90,90,90)"/><rect x="1100.0" y="389.1" width="2.2" height="2.2" fill="rgb(116,116,116)"/><rect x="1095.5" y="389.1" width="2.2" height="2.2" fill="rgb(80,80,80)"/><rect x="1097.6" y="389.1" width="2.2" height="2.2" fill="rgb(118,118,118)"/><rect x="1089.8" y="391.2" width="2.2" height="2.2" fill="rgb(55,55,55)"/><rect x="1091.9" y="391.2" width="2.2" height="2.2" fill="rgb(135,135,135)"/><rect x="1100.0" y="391.2" width="2.2" height="2.2" fill="rgb(96,96,96)"/><rect x="1102.1" y="391.2" width="2.2" height="2.2" fill="rgb(77,77,77)"/><rect x="1095.5" y="391.2" width="2.2" height="2.2" fill="rgb(81,81,81)"/><rect x="1091.9" y="393.3" width="2.2" height="2.2" fill="rgb(142,142,142)"/><rect x="1094.0" y="393.3" width="2.2" height="2.2" fill="rgb(93,93,93)"/><rect x="1100.0" y="393.3" width="2.2" height="2.2" fill="rgb(150,150,150)"/><rect x="1097.6" y="393.3" width="2.2" height="2.2" fill="rgb(72,72,72)"/><rect x="1089.7" y="395.3" width="2.2" height="2.2" fill="rgb(94,94,94)"/><rect x="1091.8" y="395.3" width="2.2" height="2.2" fill="rgb(118,118,118)"/><rect x="1093.9" y="395.3" width="2.2" height="2.2" fill="rgb(60,60,60)"/><rect x="1100.0" y="395.3" width="2.2" height="2.2" fill="rgb(118,118,118)"/><rect x="1102.1" y="395.3" width="2.2" height="2.2" fill="rgb(53,53,53)"/><rect x="1095.5" y="395.3" width="2.2" height="2.2" fill="rgb(82,82,82)"/><rect x="1097.6" y="395.3" width="2.2" height="2.2" fill="rgb(72,72,72)"/><rect x="1091.8" y="397.4" width="2.2" height="2.2" fill="rgb(147,147,147)"/><rect x="1097.9" y="397.4" width="2.2" height="2.2" fill="rgb(65,65,65)"/><rect x="1100.0" y="397.4" width="2.2" height="2.2" fill="rgb(141,141,141)"/><rect x="1102.1" y="397.4" width="2.2" height="2.2" fill="rgb(91,91,91)"/><rect x="1095.5" y="397.4" width="2.2" height="2.2" fill="rgb(79,79,79)"/><rect x="1097.6" y="397.4" width="2.2" height="2.2" fill="rgb(105,105,105)"/><rect x="1089.7" y="399.5" width="2.2" height="2.2" fill="rgb(86,86,86)"/><rect x="1091.7" y="399.5" width="2.2" height="2.2" fill="rgb(100,100,100)"/><rect x="1093.8" y="399.5" width="2.2" height="2.2" fill="rgb(98,98,98)"/><rect x="1100.0" y="399.5" width="2.2" height="2.2" fill="rgb(104,104,104)"/><rect x="1095.5" y="399.5" width="2.2" height="2.2" fill="rgb(109,109,109)"/><rect x="1097.6" y="399.5" width="2.2" height="2.2" fill="rgb(73,73,73)"/><rect x="1089.6" y="401.6" width="2.2" height="2.2" fill="rgb(68,68,68)"/><rect x="1091.7" y="401.6" width="2.2" height="2.2" fill="rgb(147,147,147)"/><rect x="1093.8" y="401.6" width="2.2" height="2.2" fill="rgb(53,53,53)"/><rect x="1100.0" y="401.6" width="2.2" height="2.2" fill="rgb(99,99,99)"/><rect x="1095.5" y="401.6" width="2.2" height="2.2" fill="rgb(67,67,67)"/><rect x="1097.6" y="401.6" width="2.2" height="2.2" fill="rgb(88,88,88)"/><rect x="1089.6" y="403.7" width="2.2" height="2.2" fill="rgb(73,73,73)"/><rect x="1091.7" y="403.7" width="2.2" height="2.2" fill="rgb(94,94,94)"/><rect x="1093.7" y="403.7" width="2.2" height="2.2" fill="rgb(79,79,79)"/><rect x="1100.0" y="403.7" width="2.2" height="2.2" fill="rgb(95,95,95)"/><rect x="1095.5" y="403.7" width="2.2" height="2.2" fill="rgb(107,107,107)"/><rect x="1097.6" y="403.7" width="2.2" height="2.2" fill="rgb(66,66,66)"/><rect x="1093.7" y="405.8" width="2.2" height="2.2" fill="rgb(100,100,100)"/><rect x="1097.9" y="405.8" width="2.2" height="2.2" fill="rgb(50,50,50)"/><rect x="1100.0" y="405.8" width="2.2" height="2.2" fill="rgb(96,96,96)"/><rect x="1091.6" y="407.9" width="2.2" height="2.2" fill="rgb(116,116,116)"/><rect x="1093.7" y="407.9" width="2.2" height="2.2" fill="rgb(97,97,97)"/><rect x="1097.9" y="407.9" width="2.2" height="2.2" fill="rgb(99,99,99)"/><rect x="1100.0" y="407.9" width="2.2" height="2.2" fill="rgb(103,103,103)"/><rect x="1102.1" y="407.9" width="2.2" height="2.2" fill="rgb(61,61,61)"/><rect x="1097.6" y="407.9" width="2.2" height="2.2" fill="rgb(117,117,117)"/><rect x="1091.5" y="409.9" width="2.2" height="2.2" fill="rgb(124,124,124)"/><rect x="1098.2" y="409.9" width="2.2" height="2.2" fill="rgb(61,61,61)"/><rect x="1100.3" y="409.9" width="2.2" height="2.2" fill="rgb(130,130,130)"/><rect x="1102.3" y="409.9" width="2.2" height="2.2" fill="rgb(73,73,73)"/><rect x="1095.5" y="409.9" width="2.2" height="2.2" fill="rgb(118,118,118)"/><rect x="1097.6" y="409.9" width="2.2" height="2.2" fill="rgb(113,113,113)"/><rect x="1089.4" y="412.0" width="2.2" height="2.2" fill="rgb(53,53,53)"/><rect x="1091.5" y="412.0" width="2.2" height="2.2" fill="rgb(136,136,136)"/><rect x="1100.8" y="412.0" width="2.2" height="2.2" fill="rgb(148,148,148)"/><rect x="1091.4" y="414.1" width="2.2" height="2.2" fill="rgb(95,95,95)"/><rect x="1093.4" y="414.1" width="2.2" height="2.2" fill="rgb(64,64,64)"/><rect x="1099.3" y="414.1" width="2.2" height="2.2" fill="rgb(78,78,78)"/><rect x="1101.4" y="414.1" width="2.2" height="2.2" fill="rgb(136,136,136)"/><rect x="1103.5" y="414.1" width="2.2" height="2.2" fill="rgb(52,52,52)"/><rect x="1091.3" y="416.2" width="2.2" height="2.2" fill="rgb(112,112,112)"/><rect x="1099.9" y="416.2" width="2.2" height="2.2" fill="rgb(103,103,103)"/><rect x="1101.9" y="416.2" width="2.2" height="2.2" fill="rgb(150,150,150)"/><rect x="1104.0" y="416.2" width="2.2" height="2.2" fill="rgb(68,68,68)"/><rect x="1089.1" y="418.3" width="2.2" height="2.2" fill="rgb(53,53,53)"/><rect x="1091.2" y="418.3" width="2.2" height="2.2" fill="rgb(138,138,138)"/><rect x="1100.4" y="418.3" width="2.2" height="2.2" fill="rgb(50,50,50)"/><rect x="1102.5" y="418.3" width="2.2" height="2.2" fill="rgb(107,107,107)"/><rect x="1089.0" y="420.4" width="2.2" height="2.2" fill="rgb(68,68,68)"/><rect x="1091.1" y="420.4" width="2.2" height="2.2" fill="rgb(129,129,129)"/><rect x="1101.0" y="420.4" width="2.2" height="2.2" fill="rgb(84,84,84)"/><rect x="1103.1" y="420.4" width="2.2" height="2.2" fill="rgb(143,143,143)"/><rect x="1105.1" y="420.4" width="2.2" height="2.2" fill="rgb(84,84,84)"/><rect x="1090.9" y="422.4" width="2.2" height="2.2" fill="rgb(136,136,136)"/><rect x="1103.6" y="422.4" width="2.2" height="2.2" fill="rgb(92,92,92)"/><rect x="1088.5" y="424.5" width="2.2" height="2.2" fill="rgb(92,92,92)"/><rect x="1090.5" y="424.5" width="2.2" height="2.2" fill="rgb(138,138,138)"/><rect x="1102.0" y="424.5" width="2.2" height="2.2" fill="rgb(91,91,91)"/><rect x="1104.1" y="424.5" width="2.2" height="2.2" fill="rgb(128,128,128)"/><rect x="1106.2" y="424.5" width="2.2" height="2.2" fill="rgb(90,90,90)"/><rect x="1088.1" y="426.6" width="2.2" height="2.2" fill="rgb(62,62,62)"/><rect x="1090.2" y="426.6" width="2.2" height="2.2" fill="rgb(142,142,142)"/><rect x="1102.6" y="426.6" width="2.2" height="2.2" fill="rgb(87,87,87)"/><rect x="1104.7" y="426.6" width="2.2" height="2.2" fill="rgb(138,138,138)"/><rect x="1106.7" y="426.6" width="2.2" height="2.2" fill="rgb(65,65,65)"/><rect x="1089.8" y="428.7" width="2.2" height="2.2" fill="rgb(99,99,99)"/><rect x="1091.9" y="428.7" width="2.2" height="2.2" fill="rgb(62,62,62)"/><rect x="1103.1" y="428.7" width="2.2" height="2.2" fill="rgb(57,57,57)"/><rect x="1105.2" y="428.7" width="2.2" height="2.2" fill="rgb(117,117,117)"/><rect x="1087.3" y="430.8" width="2.2" height="2.2" fill="rgb(92,92,92)"/><rect x="1089.4" y="430.8" width="2.2" height="2.2" fill="rgb(147,147,147)"/><rect x="1091.5" y="430.8" width="2.2" height="2.2" fill="rgb(79,79,79)"/><rect x="1103.6" y="430.8" width="2.2" height="2.2" fill="rgb(86,86,86)"/><rect x="1105.7" y="430.8" width="2.2" height="2.2" fill="rgb(150,150,150)"/><rect x="1089.1" y="432.9" width="2.2" height="2.2" fill="rgb(94,94,94)"/><rect x="1104.1" y="432.9" width="2.2" height="2.2" fill="rgb(82,82,82)"/><rect x="1106.2" y="432.9" width="2.2" height="2.2" fill="rgb(99,99,99)"/><rect x="1088.7" y="435.0" width="2.2" height="2.2" fill="rgb(143,143,143)"/><rect x="1104.7" y="435.0" width="2.2" height="2.2" fill="rgb(60,60,60)"/><rect x="1108.8" y="435.0" width="2.2" height="2.2" fill="rgb(80,80,80)"/><rect x="1088.5" y="437.0" width="2.2" height="2.2" fill="rgb(92,92,92)"/><rect x="1090.6" y="437.0" width="2.2" height="2.2" fill="rgb(53,53,53)"/><rect x="1104.9" y="437.0" width="2.2" height="2.2" fill="rgb(50,50,50)"/><rect x="1107.0" y="437.0" width="2.2" height="2.2" fill="rgb(112,112,112)"/><rect x="1109.1" y="437.0" width="2.2" height="2.2" fill="rgb(57,57,57)"/><rect x="1088.6" y="439.1" width="2.2" height="2.2" fill="rgb(96,96,96)"/><rect x="1107.0" y="439.1" width="2.2" height="2.2" fill="rgb(130,130,130)"/><rect x="1109.1" y="439.1" width="2.2" height="2.2" fill="rgb(97,97,97)"/><rect x="1088.7" y="441.2" width="2.2" height="2.2" fill="rgb(86,86,86)"/><rect x="1104.9" y="441.2" width="2.2" height="2.2" fill="rgb(73,73,73)"/><rect x="1107.0" y="441.2" width="2.2" height="2.2" fill="rgb(130,130,130)"/><rect x="1086.6" y="443.3" width="2.2" height="2.2" fill="rgb(88,88,88)"/><rect x="1088.7" y="443.3" width="2.2" height="2.2" fill="rgb(130,130,130)"/><rect x="1090.8" y="443.3" width="2.2" height="2.2" fill="rgb(101,101,101)"/><rect x="1107.0" y="443.3" width="2.2" height="2.2" fill="rgb(116,116,116)"/><rect x="1109.1" y="443.3" width="2.2" height="2.2" fill="rgb(62,62,62)"/><rect x="1088.8" y="445.4" width="2.2" height="2.2" fill="rgb(141,141,141)"/><rect x="1090.9" y="445.4" width="2.2" height="2.2" fill="rgb(51,51,51)"/><rect x="1104.9" y="445.4" width="2.2" height="2.2" fill="rgb(54,54,54)"/><rect x="1107.0" y="445.4" width="2.2" height="2.2" fill="rgb(108,108,108)"/><rect x="1109.1" y="445.4" width="2.2" height="2.2" fill="rgb(68,68,68)"/><rect x="1088.9" y="447.5" width="2.2" height="2.2" fill="rgb(103,103,103)"/><rect x="1104.9" y="447.5" width="2.2" height="2.2" fill="rgb(94,94,94)"/><rect x="1107.0" y="447.5" width="2.2" height="2.2" fill="rgb(119,119,119)"/><rect x="1086.8" y="449.6" width="2.2" height="2.2" fill="rgb(71,71,71)"/><rect x="1091.0" y="449.6" width="2.2" height="2.2" fill="rgb(80,80,80)"/><rect x="1107.0" y="449.6" width="2.2" height="2.2" fill="rgb(89,89,89)"/><rect x="1109.1" y="449.6" width="2.2" height="2.2" fill="rgb(89,89,89)"/><rect x="1089.0" y="451.6" width="2.2" height="2.2" fill="rgb(135,135,135)"/><rect x="1107.0" y="451.6" width="2.2" height="2.2" fill="rgb(142,142,142)"/><rect x="1109.1" y="451.6" width="2.2" height="2.2" fill="rgb(105,105,105)"/><rect x="1089.5" y="453.7" width="2.2" height="2.2" fill="rgb(131,131,131)"/><rect x="1091.5" y="453.7" width="2.2" height="2.2" fill="rgb(63,63,63)"/><rect x="1104.5" y="453.7" width="2.2" height="2.2" fill="rgb(58,58,58)"/><rect x="1106.6" y="453.7" width="2.2" height="2.2" fill="rgb(90,90,90)"/><rect x="1108.7" y="453.7" width="2.2" height="2.2" fill="rgb(102,102,102)"/><rect x="1087.9" y="455.8" width="2.2" height="2.2" fill="rgb(79,79,79)"/><rect x="1090.0" y="455.8" width="2.2" height="2.2" fill="rgb(144,144,144)"/><rect x="1092.1" y="455.8" width="2.2" height="2.2" fill="rgb(72,72,72)"/><rect x="1104.0" y="455.8" width="2.2" height="2.2" fill="rgb(71,71,71)"/><rect x="1106.1" y="455.8" width="2.2" height="2.2" fill="rgb(127,127,127)"/><rect x="1108.2" y="455.8" width="2.2" height="2.2" fill="rgb(65,65,65)"/><rect x="1088.5" y="457.9" width="2.2" height="2.2" fill="rgb(88,88,88)"/><rect x="1090.6" y="457.9" width="2.2" height="2.2" fill="rgb(103,103,103)"/><rect x="1103.5" y="457.9" width="2.2" height="2.2" fill="rgb(74,74,74)"/><rect x="1105.6" y="457.9" width="2.2" height="2.2" fill="rgb(149,149,149)"/><rect x="1089.0" y="460.0" width="2.2" height="2.2" fill="rgb(86,86,86)"/><rect x="1091.1" y="460.0" width="2.2" height="2.2" fill="rgb(102,102,102)"/><rect x="1103.0" y="460.0" width="2.2" height="2.2" fill="rgb(85,85,85)"/><rect x="1107.2" y="460.0" width="2.2" height="2.2" fill="rgb(62,62,62)"/><rect x="1091.7" y="462.1" width="2.2" height="2.2" fill="rgb(97,97,97)"/><rect x="1093.7" y="462.1" width="2.2" height="2.2" fill="rgb(68,68,68)"/><rect x="1104.6" y="462.1" width="2.2" height="2.2" fill="rgb(103,103,103)"/><rect x="1090.1" y="464.1" width="2.2" height="2.2" fill="rgb(98,98,98)"/><rect x="1092.2" y="464.1" width="2.2" height="2.2" fill="rgb(131,131,131)"/><rect x="1094.3" y="464.1" width="2.2" height="2.2" fill="rgb(90,90,90)"/><rect x="1102.1" y="464.1" width="2.2" height="2.2" fill="rgb(105,105,105)"/><rect x="1104.1" y="464.1" width="2.2" height="2.2" fill="rgb(136,136,136)"/><rect x="1106.2" y="464.1" width="2.2" height="2.2" fill="rgb(95,95,95)"/><rect x="1090.7" y="466.2" width="2.2" height="2.2" fill="rgb(70,70,70)"/><rect x="1092.8" y="466.2" width="2.2" height="2.2" fill="rgb(146,146,146)"/><rect x="1094.9" y="466.2" width="2.2" height="2.2" fill="rgb(65,65,65)"/><rect x="1105.7" y="466.2" width="2.2" height="2.2" fill="rgb(63,63,63)"/><rect x="1091.2" y="468.3" width="2.2" height="2.2" fill="rgb(105,105,105)"/><rect x="1093.3" y="468.3" width="2.2" height="2.2" fill="rgb(136,136,136)"/><rect x="1095.4" y="468.3" width="2.2" height="2.2" fill="rgb(86,86,86)"/><rect x="1228" y="428.5" width="5" height="5" fill="#f4f4f4"/><rect x="1029" y="374.0" width="2.2" height="2.2" fill="#e8e8e8"/><rect x="721.2" y="137.0" width="2.6" height="2.6" fill="#f2f2f2"/><rect x="756.6" y="288.1" width="4.4" height="4.4" fill="#f2f2f2"/><rect x="863.6" y="321.6" width="2.8" height="2.8" fill="#f2f2f2"/><rect x="893.3" y="246.1" width="2.4" height="2.4" fill="#f2f2f2"/><rect x="1068.9" y="383.1" width="2.8" height="2.8" fill="#f2f2f2"/><rect x="1112.4" y="429.1" width="2.2" height="2.2" fill="#f2f2f2"/><rect x="1135.6" y="319.6" width="1.8" height="1.8" fill="#f2f2f2"/><rect x="978.7" y="443.0" width="1.6" height="1.6" fill="#f2f2f2"/><rect x="802.6" y="198.3" width="2.4" height="2.4" fill="#3a3a3a"/><rect x="1119.1" y="12.1" width="2.4" height="2.4" fill="#3a3a3a"/><rect x="1195.1" y="36.1" width="2.4" height="2.4" fill="#3a3a3a"/><rect x="1113.6" y="81.1" width="2.4" height="2.4" fill="#3a3a3a"/><rect x="1021.3" y="115.3" width="2.4" height="2.4" fill="#3a3a3a"/><rect x="1144.1" y="156.8" width="2.4" height="2.4" fill="#3a3a3a"/><rect x="1205.8" y="117.1" width="2.4" height="2.4" fill="#3a3a3a"/><rect x="800.8" y="274.3" width="2.4" height="2.4" fill="#3a3a3a"/><rect x="712.1" y="285.1" width="2.4" height="2.4" fill="#3a3a3a"/><rect x="788.1" y="323.3" width="2.4" height="2.4" fill="#3a3a3a"/><rect x="1209.1" y="290.3" width="2.4" height="2.4" fill="#3a3a3a"/><rect x="1184.1" y="408.1" width="2.4" height="2.4" fill="#3a3a3a"/><rect x="1137.1" y="397.1" width="2.4" height="2.4" fill="#3a3a3a"/><rect x="719.6" y="440.1" width="2.4" height="2.4" fill="#3a3a3a"/><rect x="768.1" y="445.8" width="2.4" height="2.4" fill="#3a3a3a"/><rect x="1079.1" y="272.3" width="2.4" height="2.4" fill="#3a3a3a"/></g>
<g stroke="#27e6cb" stroke-width="2.4" fill="none">
<circle cx="722.5" cy="138.3" r="5.1"/>
<circle cx="1022.5" cy="116.5" r="5.1"/>
<circle cx="803.8" cy="199.5" r="5.1"/>
<circle cx="865.5" cy="198.0" r="5.1"/>
<circle cx="894.3" cy="246.8" r="5.1"/>
<circle cx="1120.3" cy="13.3" r="5.1"/>
<circle cx="1196.3" cy="37.3" r="5.1"/>
<circle cx="1114.8" cy="82.3" r="5.1"/>
<circle cx="1207.0" cy="118.3" r="5.1"/>
<circle cx="1145.3" cy="158.0" r="5.1"/>
<circle cx="1145.3" cy="221.5" r="5.1"/>
<circle cx="1130.8" cy="224.8" r="5.1"/>
<circle cx="1075.0" cy="241.0" r="5.1"/>
<circle cx="1141.8" cy="250.0" r="5.1"/>
<circle cx="802.0" cy="275.5" r="5.1"/>
<circle cx="713.3" cy="286.3" r="5.1"/>
<circle cx="758.3" cy="290.0" r="5.1"/>
<circle cx="789.3" cy="324.5" r="5.1"/>
<circle cx="865.3" cy="322.3" r="5.1"/>
<circle cx="948.3" cy="317.0" r="5.1"/>
<circle cx="993.3" cy="322.3" r="5.1"/>
<circle cx="1042.5" cy="335.3" r="5.1"/>
<circle cx="776.8" cy="369.5" r="5.1"/>
<circle cx="805.3" cy="369.3" r="5.1"/>
<circle cx="896.0" cy="400.0" r="5.1"/>
<circle cx="908.8" cy="401.8" r="5.1"/>
<circle cx="923.3" cy="407.3" r="5.1"/>
<circle cx="896.3" cy="418.3" r="5.1"/>
<circle cx="1042.3" cy="407.3" r="5.1"/>
<circle cx="720.8" cy="441.3" r="5.1"/>
<circle cx="769.3" cy="447.0" r="5.1"/>
<circle cx="798.3" cy="445.3" r="5.1"/>
<circle cx="979.3" cy="443.5" r="5.1"/>
<circle cx="1080.3" cy="273.5" r="5.1"/>
<circle cx="1210.3" cy="291.5" r="5.1"/>
<circle cx="1087.3" cy="322.3" r="5.1"/>
<circle cx="1136.5" cy="320.5" r="5.1"/>
<circle cx="1121.8" cy="373.3" r="5.1"/>
<circle cx="1069.3" cy="383.8" r="5.1"/>
<circle cx="1138.3" cy="398.3" r="5.1"/>
<circle cx="1185.3" cy="409.3" r="5.1"/>
<circle cx="1112.8" cy="430.8" r="5.1"/>
</g>
<g fill="#3cffff"><rect x="627.88" y="487.90" width="8.49" height="2.23"/><rect x="625.80" y="489.98" width="2.23" height="2.23"/><rect x="634.14" y="489.98" width="2.23" height="2.23"/><rect x="625.80" y="492.07" width="2.23" height="2.23"/><rect x="625.80" y="494.15" width="2.23" height="2.23"/><rect x="625.80" y="496.24" width="2.23" height="2.23"/><rect x="625.80" y="498.32" width="2.23" height="2.23"/><rect x="634.14" y="498.32" width="2.23" height="2.23"/><rect x="627.88" y="500.41" width="8.49" height="2.23"/><rect x="642.19" y="492.07" width="6.41" height="2.23"/><rect x="646.36" y="494.15" width="2.23" height="2.23"/><rect x="642.19" y="496.24" width="6.41" height="2.23"/><rect x="640.10" y="498.32" width="2.23" height="2.23"/><rect x="646.36" y="498.32" width="2.23" height="2.23"/><rect x="642.19" y="500.41" width="6.41" height="2.23"/><rect x="654.90" y="492.07" width="2.23" height="2.23"/><rect x="659.07" y="492.07" width="2.23" height="2.23"/><rect x="654.90" y="494.15" width="4.32" height="2.23"/><rect x="661.15" y="494.15" width="2.23" height="2.23"/><rect x="654.90" y="496.24" width="2.23" height="2.23"/><rect x="661.15" y="496.24" width="2.23" height="2.23"/><rect x="654.90" y="498.32" width="2.23" height="2.23"/><rect x="661.15" y="498.32" width="2.23" height="2.23"/><rect x="654.90" y="500.41" width="2.23" height="2.23"/><rect x="661.15" y="500.41" width="2.23" height="2.23"/><rect x="675.25" y="487.90" width="2.23" height="2.23"/><rect x="675.25" y="489.98" width="2.23" height="2.23"/><rect x="673.17" y="492.07" width="4.32" height="2.23"/><rect x="671.09" y="494.15" width="2.23" height="2.23"/><rect x="675.25" y="494.15" width="2.23" height="2.23"/><rect x="669.00" y="496.24" width="2.23" height="2.23"/><rect x="675.25" y="496.24" width="2.23" height="2.23"/><rect x="669.00" y="498.32" width="2.23" height="2.23"/><rect x="675.25" y="498.32" width="2.23" height="2.23"/><rect x="671.09" y="500.41" width="6.41" height="2.23"/><rect x="684.29" y="485.81" width="2.23" height="2.23"/><rect x="682.20" y="487.90" width="4.32" height="2.23"/><rect x="684.29" y="489.98" width="2.23" height="2.23"/><rect x="684.29" y="492.07" width="2.23" height="2.23"/><rect x="684.29" y="494.15" width="2.23" height="2.23"/><rect x="684.29" y="496.24" width="2.23" height="2.23"/><rect x="684.29" y="498.32" width="2.23" height="2.23"/><rect x="684.29" y="500.41" width="2.23" height="2.23"/><rect x="697.54" y="487.90" width="2.23" height="2.23"/><rect x="697.54" y="489.98" width="2.23" height="2.23"/><rect x="693.37" y="492.07" width="6.41" height="2.23"/><rect x="691.29" y="494.15" width="2.23" height="2.23"/><rect x="697.54" y="494.15" width="2.23" height="2.23"/><rect x="689.20" y="496.24" width="2.23" height="2.23"/><rect x="697.54" y="496.24" width="2.23" height="2.23"/><rect x="689.20" y="498.32" width="2.23" height="2.23"/><rect x="697.54" y="498.32" width="2.23" height="2.23"/><rect x="691.29" y="500.41" width="8.49" height="2.23"/><rect x="706.29" y="492.07" width="6.41" height="2.23"/><rect x="710.46" y="494.15" width="2.23" height="2.23"/><rect x="706.29" y="496.24" width="6.41" height="2.23"/><rect x="704.20" y="498.32" width="2.23" height="2.23"/><rect x="710.46" y="498.32" width="2.23" height="2.23"/><rect x="706.29" y="500.41" width="6.41" height="2.23"/><rect x="718.38" y="487.90" width="2.23" height="2.23"/><rect x="718.38" y="489.98" width="2.23" height="2.23"/><rect x="716.30" y="492.07" width="8.49" height="2.23"/><rect x="718.38" y="494.15" width="2.23" height="2.23"/><rect x="718.38" y="496.24" width="2.23" height="2.23"/><rect x="718.38" y="498.32" width="2.23" height="2.23"/><rect x="718.38" y="500.41" width="6.41" height="2.23"/><rect x="731.37" y="492.07" width="2.23" height="2.23"/><rect x="729.29" y="494.15" width="2.23" height="2.23"/><rect x="733.46" y="494.15" width="2.23" height="2.23"/><rect x="727.20" y="496.24" width="10.58" height="2.23"/><rect x="727.20" y="498.32" width="2.23" height="2.23"/><rect x="729.29" y="500.41" width="6.41" height="2.23"/><rect x="744.19" y="492.07" width="6.41" height="2.23"/><rect x="742.10" y="494.15" width="2.23" height="2.23"/><rect x="744.19" y="496.24" width="4.32" height="2.23"/><rect x="748.36" y="498.32" width="2.23" height="2.23"/><rect x="742.10" y="500.41" width="6.41" height="2.23"/><rect x="755.90" y="492.07" width="2.23" height="2.23"/><rect x="755.90" y="494.15" width="2.23" height="2.23"/><rect x="755.90" y="500.41" width="2.23" height="2.23"/><rect x="780.54" y="487.90" width="2.23" height="2.23"/><rect x="778.46" y="489.98" width="4.32" height="2.23"/><rect x="776.37" y="492.07" width="2.23" height="2.23"/><rect x="780.54" y="492.07" width="2.23" height="2.23"/><rect x="774.29" y="494.15" width="2.23" height="2.23"/><rect x="780.54" y="494.15" width="2.23" height="2.23"/><rect x="772.20" y="496.24" width="14.74" height="2.23"/><rect x="780.54" y="498.32" width="2.23" height="2.23"/><rect x="780.54" y="500.41" width="2.23" height="2.23"/><rect x="791.09" y="487.90" width="6.41" height="2.23"/><rect x="789.00" y="489.98" width="2.23" height="2.23"/><rect x="797.34" y="489.98" width="2.23" height="2.23"/><rect x="797.34" y="492.07" width="2.23" height="2.23"/><rect x="795.25" y="494.15" width="2.23" height="2.23"/><rect x="793.17" y="496.24" width="2.23" height="2.23"/><rect x="791.09" y="498.32" width="2.23" height="2.23"/><rect x="789.00" y="500.41" width="10.58" height="2.23"/></g>
<g fill="#48ff22"><rect x="625.80" y="515.00" width="8.49" height="2.23"/><rect x="625.80" y="517.09" width="2.23" height="2.23"/><rect x="632.05" y="517.09" width="2.23" height="2.23"/><rect x="625.80" y="519.17" width="2.23" height="2.23"/><rect x="632.05" y="519.17" width="2.23" height="2.23"/><rect x="625.80" y="521.25" width="8.49" height="2.23"/><rect x="625.80" y="523.34" width="2.23" height="2.23"/><rect x="625.80" y="525.42" width="2.23" height="2.23"/><rect x="625.80" y="527.51" width="2.23" height="2.23"/><rect x="644.27" y="519.17" width="2.23" height="2.23"/><rect x="642.19" y="521.25" width="2.23" height="2.23"/><rect x="646.36" y="521.25" width="2.23" height="2.23"/><rect x="640.10" y="523.34" width="10.58" height="2.23"/><rect x="640.10" y="525.42" width="2.23" height="2.23"/><rect x="642.19" y="527.51" width="6.41" height="2.23"/><rect x="654.90" y="519.17" width="8.49" height="2.23"/><rect x="654.90" y="521.25" width="2.23" height="2.23"/><rect x="654.90" y="523.34" width="2.23" height="2.23"/><rect x="654.90" y="525.42" width="2.23" height="2.23"/><rect x="654.90" y="527.51" width="2.23" height="2.23"/><rect x="668.09" y="519.17" width="4.32" height="2.23"/><rect x="666.00" y="521.25" width="2.23" height="2.23"/><rect x="672.25" y="521.25" width="2.23" height="2.23"/><rect x="668.09" y="523.34" width="4.32" height="2.23"/><rect x="666.00" y="525.42" width="2.23" height="2.23"/><rect x="672.25" y="525.42" width="2.23" height="2.23"/><rect x="668.09" y="527.51" width="4.32" height="2.23"/><rect x="679.19" y="512.91" width="2.23" height="2.23"/><rect x="677.10" y="515.00" width="2.23" height="2.23"/><rect x="681.27" y="515.00" width="2.23" height="2.23"/><rect x="679.19" y="517.09" width="2.23" height="2.23"/><rect x="679.19" y="519.17" width="2.23" height="2.23"/><rect x="679.19" y="521.25" width="2.23" height="2.23"/><rect x="679.19" y="523.34" width="2.23" height="2.23"/><rect x="679.19" y="525.42" width="2.23" height="2.23"/><rect x="679.19" y="527.51" width="2.23" height="2.23"/><rect x="686.19" y="519.17" width="4.32" height="2.23"/><rect x="684.10" y="521.25" width="2.23" height="2.23"/><rect x="690.36" y="521.25" width="2.23" height="2.23"/><rect x="686.19" y="523.34" width="4.32" height="2.23"/><rect x="684.10" y="525.42" width="2.23" height="2.23"/><rect x="690.36" y="525.42" width="2.23" height="2.23"/><rect x="686.19" y="527.51" width="4.32" height="2.23"/><rect x="700.19" y="515.00" width="2.23" height="2.23"/><rect x="700.19" y="517.09" width="2.23" height="2.23"/><rect x="698.10" y="519.17" width="8.49" height="2.23"/><rect x="700.19" y="521.25" width="2.23" height="2.23"/><rect x="700.19" y="523.34" width="2.23" height="2.23"/><rect x="700.19" y="525.42" width="2.23" height="2.23"/><rect x="700.19" y="527.51" width="6.41" height="2.23"/><rect x="713.07" y="519.17" width="2.23" height="2.23"/><rect x="710.99" y="521.25" width="2.23" height="2.23"/><rect x="715.15" y="521.25" width="2.23" height="2.23"/><rect x="708.90" y="523.34" width="10.58" height="2.23"/><rect x="708.90" y="525.42" width="2.23" height="2.23"/><rect x="710.99" y="527.51" width="6.41" height="2.23"/><rect x="723.90" y="519.17" width="10.58" height="2.23"/><rect x="723.90" y="521.25" width="2.23" height="2.23"/><rect x="732.24" y="521.25" width="2.23" height="2.23"/><rect x="723.90" y="523.34" width="2.23" height="2.23"/><rect x="732.24" y="523.34" width="2.23" height="2.23"/><rect x="723.90" y="525.42" width="2.23" height="2.23"/><rect x="732.24" y="525.42" width="2.23" height="2.23"/><rect x="723.90" y="527.51" width="2.23" height="2.23"/><rect x="732.24" y="527.51" width="2.23" height="2.23"/><rect x="740.29" y="515.00" width="2.23" height="2.23"/><rect x="740.29" y="517.09" width="2.23" height="2.23"/><rect x="738.20" y="519.17" width="8.49" height="2.23"/><rect x="740.29" y="521.25" width="2.23" height="2.23"/><rect x="740.29" y="523.34" width="2.23" height="2.23"/><rect x="740.29" y="525.42" width="2.23" height="2.23"/><rect x="740.29" y="527.51" width="6.41" height="2.23"/><rect x="748.90" y="519.17" width="2.23" height="2.23"/><rect x="748.90" y="521.25" width="2.23" height="2.23"/><rect x="748.90" y="527.51" width="2.23" height="2.23"/><rect x="770.88" y="515.00" width="6.41" height="2.23"/><rect x="768.80" y="517.09" width="2.23" height="2.23"/><rect x="777.14" y="517.09" width="2.23" height="2.23"/><rect x="768.80" y="519.17" width="2.23" height="2.23"/><rect x="777.14" y="519.17" width="2.23" height="2.23"/><rect x="768.80" y="521.25" width="2.23" height="2.23"/><rect x="777.14" y="521.25" width="2.23" height="2.23"/><rect x="768.80" y="523.34" width="2.23" height="2.23"/><rect x="777.14" y="523.34" width="2.23" height="2.23"/><rect x="768.80" y="525.42" width="2.23" height="2.23"/><rect x="777.14" y="525.42" width="2.23" height="2.23"/><rect x="770.88" y="527.51" width="6.41" height="2.23"/></g>
<path d="M934.8 494.6 L938.5 490.0 L1016.2 490.0 L1019.8 494.6 L1016.2 499.2 L938.5 499.2 Z" fill="#18f6f6"/>
<path d="M935.2 521.5 L939.3 517.4 L943.4 521.5 L939.3 525.6 Z" fill="#40f020"/>
</svg>
</div>

<!-- STATUS BAR -->
<div id="status" class="abs">
  <div class="btn" style="left:1px;top:2px;width:53px;height:24px;line-height:23px;letter-spacing:-0.35px">Reset</div>
  <div class="t" style="right:2px;top:1px">31 fps</div>
</div>
</body>
</html>
